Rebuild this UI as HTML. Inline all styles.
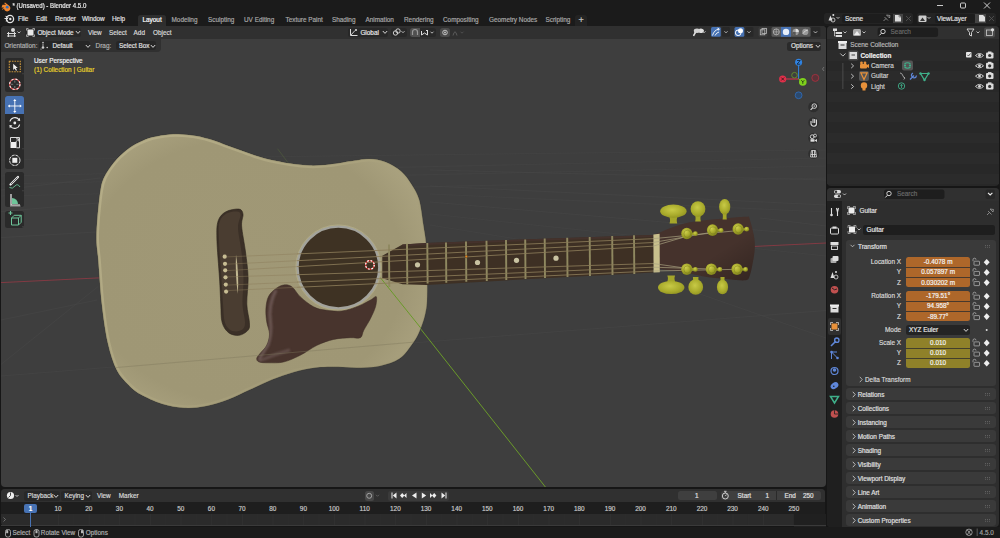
<!DOCTYPE html>
<html><head><meta charset="utf-8">
<style>
*{box-sizing:border-box;margin:0;padding:0}
html,body{width:1000px;height:538px;overflow:hidden;background:#161616;font-family:"Liberation Sans",sans-serif;color:#d9d9d9;font-size:6.4px;}
.a{position:absolute}
.t{position:absolute;white-space:nowrap;line-height:8px;height:8px;-webkit-text-stroke:0.18px currentColor}
.r{border-radius:2.5px}
svg{position:absolute;overflow:visible}
</style></head>
<body>
<!-- ============ TITLE BAR ============ -->
<div class="a" style="left:0;top:0;width:1000px;height:12px;background:#1b1b1b"></div>
<svg style="left:0;top:0" width="12" height="12"><path d="M2.5 4.8 L6 4.8 L4.2 3.2 L5 2.6 L9.5 6 A3.2 3.2 0 1 1 4 8.6 L2.6 9.8 L2 9.2 L4 7.6 L1.5 7.6 Z" fill="#f0852e"/><circle cx="7.2" cy="7.2" r="1.4" fill="#2f6fbf"/></svg>
<div class="t" style="left:12.5px;top:2px;font-size:6.1px;color:#e8e8e8;transform:scaleY(1.12);transform-origin:0 50%">* (Unsaved) - Blender 4.5.0</div>
<svg style="left:0;top:0" width="1000" height="12">
 <path d="M937 5.5 H943" stroke="#e0e0e0" stroke-width="0.9"/>
 <rect x="960.5" y="3" width="5" height="5" rx="1" fill="none" stroke="#e0e0e0" stroke-width="0.9"/>
 <path d="M984 2.5 L990 8.5 M990 2.5 L984 8.5" stroke="#e0e0e0" stroke-width="0.9"/>
</svg>
<!-- ============ TOPBAR ============ -->
<div class="a" style="left:0;top:12px;width:1000px;height:14px;background:#1b1b1b"></div>
<svg style="left:0;top:12px" width="20" height="14"><circle cx="10" cy="7" r="3.6" fill="none" stroke="#e6e6e6" stroke-width="1.3"/><circle cx="10.3" cy="7" r="1.2" fill="#e6e6e6"/><path d="M4.5 6.5 L8 6.5 M5.5 4.3 L8.5 5.2 M5.8 9 L8 8" stroke="#e6e6e6" stroke-width="1"/></svg>
<div class="t" style="left:18px;top:15px;color:#e0e0e0">File</div>
<div class="t" style="left:36px;top:15px;color:#e0e0e0">Edit</div>
<div class="t" style="left:55px;top:15px;color:#e0e0e0">Render</div>
<div class="t" style="left:82px;top:15px;color:#e0e0e0">Window</div>
<div class="t" style="left:112px;top:15px;color:#e0e0e0">Help</div>
<div class="a" style="left:138px;top:15px;width:28px;height:11px;background:#2e2e2e;border-radius:2.5px 2.5px 0 0"></div>
<div class="t" style="left:142.5px;top:16px;color:#ffffff">Layout</div>
<div class="t" style="left:171.5px;top:16px;color:#a8a8a8">Modeling</div>
<div class="t" style="left:208px;top:16px;color:#a8a8a8">Sculpting</div>
<div class="t" style="left:244px;top:16px;color:#a8a8a8">UV Editing</div>
<div class="t" style="left:285.5px;top:16px;color:#a8a8a8">Texture Paint</div>
<div class="t" style="left:332px;top:16px;color:#a8a8a8">Shading</div>
<div class="t" style="left:365.5px;top:16px;color:#a8a8a8">Animation</div>
<div class="t" style="left:404px;top:16px;color:#a8a8a8">Rendering</div>
<div class="t" style="left:443px;top:16px;color:#a8a8a8">Compositing</div>
<div class="t" style="left:489px;top:16px;color:#a8a8a8">Geometry Nodes</div>
<div class="t" style="left:545.5px;top:16px;color:#a8a8a8">Scripting</div>
<div class="a" style="left:575px;top:15px;width:12px;height:11px;background:#232323;border-radius:2.5px 2.5px 0 0"></div>
<div class="t" style="left:578.5px;top:15.5px;color:#c8c8c8;font-size:9px">+</div>
<!-- scene / viewlayer -->
<div class="a r" style="left:824px;top:13px;width:89px;height:10.5px;background:#242424"></div>
<div class="a r" style="left:842px;top:13.5px;width:61px;height:9.5px;background:#1d1d1d"></div>
<div class="a" style="left:893px;top:13.5px;width:10px;height:9.5px;background:#454545"></div>
<div class="t" style="left:845px;top:14.5px;color:#e0e0e0">Scene</div>
<div class="a r" style="left:916.5px;top:13px;width:79px;height:10.5px;background:#242424"></div>
<div class="a r" style="left:935px;top:13.5px;width:40px;height:9.5px;background:#1d1d1d"></div>
<div class="a" style="left:975px;top:13.5px;width:11px;height:9.5px;background:#454545"></div>
<div class="t" style="left:937px;top:14.5px;color:#e0e0e0">ViewLayer</div>

<!-- ============ VIEWPORT ============ -->
<div class="a" id="vp" style="left:1px;top:26px;width:824.5px;height:461px;background:#3e3e3e;border-radius:4px;overflow:hidden">
  <div class="a" style="left:0;top:0;width:825px;height:12.5px;background:#303030"></div>
  <div class="a" style="left:0;top:12.5px;width:160px;height:13.5px;background:#303030;border-bottom-right-radius:4px"></div>
</div>


<!-- GRID/AXES -->
<svg style="left:0;top:0" width="1000" height="538" viewBox="0 0 1000 538">
<g stroke="#474747" stroke-width="0.6" fill="none">
<path d="M1 237.6 L98 231.9"/>
<path d="M1 176 L826 158" stroke-width="0.5"/>
<path d="M1 184 L826 166" stroke-width="0.5"/>
<path d="M1 196 L826 178" stroke-width="0.5"/>
<path d="M430 194 L826 212" stroke-width="0.5"/>
<path d="M430 214 L826 256" stroke-width="0.5"/>
<path d="M430 225 L660 262" stroke-width="0.5"/>
<path d="M1 160 L826 150" stroke-width="0.5"/>

<path d="M1 211.7 L98 203"/>
<path d="M1 364.4 L98 286.6"/>
<path d="M1 376 L420 342.4 L826 310.5"/>
<path d="M1 190 L100 178"/>
<path d="M660 280 L826 338"/>
<path d="M430 202 L826 236"/>
<path d="M430 186 L826 205"/>
<path d="M430 170 L826 180"/>
<path d="M760 218 L826 226"/>
<path d="M1 320 L97 300"/>
</g>
<path d="M1 282.6 L826 243" stroke="#8a3a44" stroke-width="0.9"/>
<path d="M384.4 283 L545.4 487" stroke="#6a9a2a" stroke-width="1"/>
<path d="M277.5 148.7 L288.4 163.2" stroke="#4e5a3c" stroke-width="0.7"/>
</svg>
<!-- GUITAR -->
<svg style="left:0;top:0" width="1000" height="538" viewBox="0 0 1000 538">
<defs><radialGradient id="bg1" cx="0.45" cy="0.5" r="0.6"><stop offset="0" stop-color="#a09876"/><stop offset="0.8" stop-color="#9f9775"/><stop offset="1" stop-color="#aaa27f"/></radialGradient><linearGradient id="rim" x1="96" y1="134" x2="427" y2="408" gradientUnits="userSpaceOnUse"><stop offset="0" stop-color="#b7af89"/><stop offset="0.45" stop-color="#aca47f"/><stop offset="0.8" stop-color="#a39b78" stop-opacity="0.3"/><stop offset="1" stop-color="#9a9270" stop-opacity="0"/></linearGradient><filter id="blur1" x="-20%" y="-20%" width="140%" height="140%"><feGaussianBlur stdDeviation="0.9"/></filter></defs>
<clipPath id="bodyclip"><path d="M96.5 240.0 C96.4 232.9 96.8 225.9 97.5 217.6 C98.2 209.3 99.4 196.8 100.6 190.0 C101.8 183.2 102.3 181.4 104.5 176.8 C106.7 172.2 110.3 166.9 114.0 162.4 C117.7 157.9 122.6 153.3 126.8 150.0 C131.0 146.7 134.7 144.6 139.0 142.5 C143.3 140.4 147.3 138.6 152.5 137.3 C157.7 136.0 165.1 135.0 170.0 134.5 C174.9 134.0 177.6 134.2 182.0 134.5 C186.4 134.8 191.0 135.1 196.2 136.1 C201.4 137.1 207.9 138.7 213.0 140.3 C218.1 141.9 222.3 143.8 227.0 145.5 C231.7 147.2 236.3 148.8 241.0 150.5 C245.7 152.2 250.3 154.0 255.0 155.5 C259.7 157.0 263.2 158.2 269.0 159.6 C274.8 160.9 283.2 162.6 290.0 163.6 C296.8 164.6 303.3 165.4 310.0 165.6 C316.7 165.8 322.7 165.3 330.0 164.5 C337.3 163.7 347.4 161.7 354.0 160.8 C360.6 159.9 364.5 158.8 369.7 159.0 C374.9 159.2 380.1 160.1 385.3 162.1 C390.5 164.1 396.6 167.5 400.9 171.2 C405.2 174.9 408.3 179.4 411.3 184.2 C414.3 189.0 417.1 192.9 419.1 199.8 C421.1 206.7 422.2 218.2 423.4 225.6 C424.5 232.9 425.4 236.5 426.0 243.9 C426.6 251.3 426.8 260.6 427.0 270.0 C427.2 279.4 427.3 292.8 427.0 300.0 C426.7 307.2 426.2 309.2 425.3 313.4 C424.4 317.6 423.3 321.1 421.9 325.0 C420.5 328.9 418.8 333.2 416.9 336.8 C414.9 340.4 412.4 343.7 410.2 346.8 C408.0 349.9 406.0 352.8 403.5 355.2 C401.0 357.6 398.2 359.5 395.2 361.0 C392.1 362.5 388.8 363.4 385.2 364.4 C381.6 365.4 378.1 366.3 373.4 366.9 C368.6 367.4 362.6 367.7 356.7 367.7 C350.8 367.7 344.8 366.8 338.0 366.8 C331.2 366.8 323.3 366.6 316.0 367.5 C308.7 368.4 301.3 369.9 294.0 371.9 C286.7 373.9 279.3 376.7 272.0 379.6 C264.7 382.5 257.3 386.2 250.0 389.5 C242.7 392.8 235.3 396.6 228.0 399.4 C220.7 402.1 213.3 404.6 206.0 406.0 C198.7 407.4 191.3 408.2 184.0 407.8 C176.7 407.4 169.3 406.1 162.0 403.8 C154.7 401.5 145.6 397.1 140.0 394.0 C134.4 390.9 132.6 389.0 128.7 385.0 C124.8 381.0 120.3 376.9 116.8 370.0 C113.3 363.1 110.4 354.2 107.9 343.3 C105.4 332.4 103.5 318.5 101.9 304.6 C100.3 290.7 99.2 270.8 98.3 260.0 C97.4 249.2 96.6 247.1 96.5 240.0Z"/></clipPath>
<path d="M96.5 240.0 C96.4 232.9 96.8 225.9 97.5 217.6 C98.2 209.3 99.4 196.8 100.6 190.0 C101.8 183.2 102.3 181.4 104.5 176.8 C106.7 172.2 110.3 166.9 114.0 162.4 C117.7 157.9 122.6 153.3 126.8 150.0 C131.0 146.7 134.7 144.6 139.0 142.5 C143.3 140.4 147.3 138.6 152.5 137.3 C157.7 136.0 165.1 135.0 170.0 134.5 C174.9 134.0 177.6 134.2 182.0 134.5 C186.4 134.8 191.0 135.1 196.2 136.1 C201.4 137.1 207.9 138.7 213.0 140.3 C218.1 141.9 222.3 143.8 227.0 145.5 C231.7 147.2 236.3 148.8 241.0 150.5 C245.7 152.2 250.3 154.0 255.0 155.5 C259.7 157.0 263.2 158.2 269.0 159.6 C274.8 160.9 283.2 162.6 290.0 163.6 C296.8 164.6 303.3 165.4 310.0 165.6 C316.7 165.8 322.7 165.3 330.0 164.5 C337.3 163.7 347.4 161.7 354.0 160.8 C360.6 159.9 364.5 158.8 369.7 159.0 C374.9 159.2 380.1 160.1 385.3 162.1 C390.5 164.1 396.6 167.5 400.9 171.2 C405.2 174.9 408.3 179.4 411.3 184.2 C414.3 189.0 417.1 192.9 419.1 199.8 C421.1 206.7 422.2 218.2 423.4 225.6 C424.5 232.9 425.4 236.5 426.0 243.9 C426.6 251.3 426.8 260.6 427.0 270.0 C427.2 279.4 427.3 292.8 427.0 300.0 C426.7 307.2 426.2 309.2 425.3 313.4 C424.4 317.6 423.3 321.1 421.9 325.0 C420.5 328.9 418.8 333.2 416.9 336.8 C414.9 340.4 412.4 343.7 410.2 346.8 C408.0 349.9 406.0 352.8 403.5 355.2 C401.0 357.6 398.2 359.5 395.2 361.0 C392.1 362.5 388.8 363.4 385.2 364.4 C381.6 365.4 378.1 366.3 373.4 366.9 C368.6 367.4 362.6 367.7 356.7 367.7 C350.8 367.7 344.8 366.8 338.0 366.8 C331.2 366.8 323.3 366.6 316.0 367.5 C308.7 368.4 301.3 369.9 294.0 371.9 C286.7 373.9 279.3 376.7 272.0 379.6 C264.7 382.5 257.3 386.2 250.0 389.5 C242.7 392.8 235.3 396.6 228.0 399.4 C220.7 402.1 213.3 404.6 206.0 406.0 C198.7 407.4 191.3 408.2 184.0 407.8 C176.7 407.4 169.3 406.1 162.0 403.8 C154.7 401.5 145.6 397.1 140.0 394.0 C134.4 390.9 132.6 389.0 128.7 385.0 C124.8 381.0 120.3 376.9 116.8 370.0 C113.3 363.1 110.4 354.2 107.9 343.3 C105.4 332.4 103.5 318.5 101.9 304.6 C100.3 290.7 99.2 270.8 98.3 260.0 C97.4 249.2 96.6 247.1 96.5 240.0Z" fill="none" stroke="#333333" stroke-width="1.4"/>
<path d="M96.5 240.0 C96.4 232.9 96.8 225.9 97.5 217.6 C98.2 209.3 99.4 196.8 100.6 190.0 C101.8 183.2 102.3 181.4 104.5 176.8 C106.7 172.2 110.3 166.9 114.0 162.4 C117.7 157.9 122.6 153.3 126.8 150.0 C131.0 146.7 134.7 144.6 139.0 142.5 C143.3 140.4 147.3 138.6 152.5 137.3 C157.7 136.0 165.1 135.0 170.0 134.5 C174.9 134.0 177.6 134.2 182.0 134.5 C186.4 134.8 191.0 135.1 196.2 136.1 C201.4 137.1 207.9 138.7 213.0 140.3 C218.1 141.9 222.3 143.8 227.0 145.5 C231.7 147.2 236.3 148.8 241.0 150.5 C245.7 152.2 250.3 154.0 255.0 155.5 C259.7 157.0 263.2 158.2 269.0 159.6 C274.8 160.9 283.2 162.6 290.0 163.6 C296.8 164.6 303.3 165.4 310.0 165.6 C316.7 165.8 322.7 165.3 330.0 164.5 C337.3 163.7 347.4 161.7 354.0 160.8 C360.6 159.9 364.5 158.8 369.7 159.0 C374.9 159.2 380.1 160.1 385.3 162.1 C390.5 164.1 396.6 167.5 400.9 171.2 C405.2 174.9 408.3 179.4 411.3 184.2 C414.3 189.0 417.1 192.9 419.1 199.8 C421.1 206.7 422.2 218.2 423.4 225.6 C424.5 232.9 425.4 236.5 426.0 243.9 C426.6 251.3 426.8 260.6 427.0 270.0 C427.2 279.4 427.3 292.8 427.0 300.0 C426.7 307.2 426.2 309.2 425.3 313.4 C424.4 317.6 423.3 321.1 421.9 325.0 C420.5 328.9 418.8 333.2 416.9 336.8 C414.9 340.4 412.4 343.7 410.2 346.8 C408.0 349.9 406.0 352.8 403.5 355.2 C401.0 357.6 398.2 359.5 395.2 361.0 C392.1 362.5 388.8 363.4 385.2 364.4 C381.6 365.4 378.1 366.3 373.4 366.9 C368.6 367.4 362.6 367.7 356.7 367.7 C350.8 367.7 344.8 366.8 338.0 366.8 C331.2 366.8 323.3 366.6 316.0 367.5 C308.7 368.4 301.3 369.9 294.0 371.9 C286.7 373.9 279.3 376.7 272.0 379.6 C264.7 382.5 257.3 386.2 250.0 389.5 C242.7 392.8 235.3 396.6 228.0 399.4 C220.7 402.1 213.3 404.6 206.0 406.0 C198.7 407.4 191.3 408.2 184.0 407.8 C176.7 407.4 169.3 406.1 162.0 403.8 C154.7 401.5 145.6 397.1 140.0 394.0 C134.4 390.9 132.6 389.0 128.7 385.0 C124.8 381.0 120.3 376.9 116.8 370.0 C113.3 363.1 110.4 354.2 107.9 343.3 C105.4 332.4 103.5 318.5 101.9 304.6 C100.3 290.7 99.2 270.8 98.3 260.0 C97.4 249.2 96.6 247.1 96.5 240.0Z" fill="url(#bg1)"/>
<path d="M96.5 240.0 C96.4 232.9 96.8 225.9 97.5 217.6 C98.2 209.3 99.4 196.8 100.6 190.0 C101.8 183.2 102.3 181.4 104.5 176.8 C106.7 172.2 110.3 166.9 114.0 162.4 C117.7 157.9 122.6 153.3 126.8 150.0 C131.0 146.7 134.7 144.6 139.0 142.5 C143.3 140.4 147.3 138.6 152.5 137.3 C157.7 136.0 165.1 135.0 170.0 134.5 C174.9 134.0 177.6 134.2 182.0 134.5 C186.4 134.8 191.0 135.1 196.2 136.1 C201.4 137.1 207.9 138.7 213.0 140.3 C218.1 141.9 222.3 143.8 227.0 145.5 C231.7 147.2 236.3 148.8 241.0 150.5 C245.7 152.2 250.3 154.0 255.0 155.5 C259.7 157.0 263.2 158.2 269.0 159.6 C274.8 160.9 283.2 162.6 290.0 163.6 C296.8 164.6 303.3 165.4 310.0 165.6 C316.7 165.8 322.7 165.3 330.0 164.5 C337.3 163.7 347.4 161.7 354.0 160.8 C360.6 159.9 364.5 158.8 369.7 159.0 C374.9 159.2 380.1 160.1 385.3 162.1 C390.5 164.1 396.6 167.5 400.9 171.2 C405.2 174.9 408.3 179.4 411.3 184.2 C414.3 189.0 417.1 192.9 419.1 199.8 C421.1 206.7 422.2 218.2 423.4 225.6 C424.5 232.9 425.4 236.5 426.0 243.9 C426.6 251.3 426.8 260.6 427.0 270.0 C427.2 279.4 427.3 292.8 427.0 300.0 C426.7 307.2 426.2 309.2 425.3 313.4 C424.4 317.6 423.3 321.1 421.9 325.0 C420.5 328.9 418.8 333.2 416.9 336.8 C414.9 340.4 412.4 343.7 410.2 346.8 C408.0 349.9 406.0 352.8 403.5 355.2 C401.0 357.6 398.2 359.5 395.2 361.0 C392.1 362.5 388.8 363.4 385.2 364.4 C381.6 365.4 378.1 366.3 373.4 366.9 C368.6 367.4 362.6 367.7 356.7 367.7 C350.8 367.7 344.8 366.8 338.0 366.8 C331.2 366.8 323.3 366.6 316.0 367.5 C308.7 368.4 301.3 369.9 294.0 371.9 C286.7 373.9 279.3 376.7 272.0 379.6 C264.7 382.5 257.3 386.2 250.0 389.5 C242.7 392.8 235.3 396.6 228.0 399.4 C220.7 402.1 213.3 404.6 206.0 406.0 C198.7 407.4 191.3 408.2 184.0 407.8 C176.7 407.4 169.3 406.1 162.0 403.8 C154.7 401.5 145.6 397.1 140.0 394.0 C134.4 390.9 132.6 389.0 128.7 385.0 C124.8 381.0 120.3 376.9 116.8 370.0 C113.3 363.1 110.4 354.2 107.9 343.3 C105.4 332.4 103.5 318.5 101.9 304.6 C100.3 290.7 99.2 270.8 98.3 260.0 C97.4 249.2 96.6 247.1 96.5 240.0Z" fill="none" stroke="url(#rim)" stroke-width="5" clip-path="url(#bodyclip)"/>
<path d="M96.5 240.0 C96.4 232.9 96.8 225.9 97.5 217.6 C98.2 209.3 99.4 196.8 100.6 190.0 C101.8 183.2 102.3 181.4 104.5 176.8 C106.7 172.2 110.3 166.9 114.0 162.4 C117.7 157.9 122.6 153.3 126.8 150.0 C131.0 146.7 134.7 144.6 139.0 142.5 C143.3 140.4 147.3 138.6 152.5 137.3 C157.7 136.0 165.1 135.0 170.0 134.5 C174.9 134.0 177.6 134.2 182.0 134.5 C186.4 134.8 191.0 135.1 196.2 136.1 C201.4 137.1 207.9 138.7 213.0 140.3 C218.1 141.9 222.3 143.8 227.0 145.5 C231.7 147.2 236.3 148.8 241.0 150.5 C245.7 152.2 250.3 154.0 255.0 155.5 C259.7 157.0 263.2 158.2 269.0 159.6 C274.8 160.9 283.2 162.6 290.0 163.6 C296.8 164.6 303.3 165.4 310.0 165.6 C316.7 165.8 322.7 165.3 330.0 164.5 C337.3 163.7 347.4 161.7 354.0 160.8 C360.6 159.9 364.5 158.8 369.7 159.0 C374.9 159.2 380.1 160.1 385.3 162.1 C390.5 164.1 396.6 167.5 400.9 171.2 C405.2 174.9 408.3 179.4 411.3 184.2 C414.3 189.0 417.1 192.9 419.1 199.8 C421.1 206.7 422.2 218.2 423.4 225.6 C424.5 232.9 425.4 236.5 426.0 243.9 C426.6 251.3 426.8 260.6 427.0 270.0 C427.2 279.4 427.3 292.8 427.0 300.0 C426.7 307.2 426.2 309.2 425.3 313.4 C424.4 317.6 423.3 321.1 421.9 325.0 C420.5 328.9 418.8 333.2 416.9 336.8 C414.9 340.4 412.4 343.7 410.2 346.8 C408.0 349.9 406.0 352.8 403.5 355.2 C401.0 357.6 398.2 359.5 395.2 361.0 C392.1 362.5 388.8 363.4 385.2 364.4 C381.6 365.4 378.1 366.3 373.4 366.9 C368.6 367.4 362.6 367.7 356.7 367.7 C350.8 367.7 344.8 366.8 338.0 366.8 C331.2 366.8 323.3 366.6 316.0 367.5 C308.7 368.4 301.3 369.9 294.0 371.9 C286.7 373.9 279.3 376.7 272.0 379.6 C264.7 382.5 257.3 386.2 250.0 389.5 C242.7 392.8 235.3 396.6 228.0 399.4 C220.7 402.1 213.3 404.6 206.0 406.0 C198.7 407.4 191.3 408.2 184.0 407.8 C176.7 407.4 169.3 406.1 162.0 403.8 C154.7 401.5 145.6 397.1 140.0 394.0 C134.4 390.9 132.6 389.0 128.7 385.0 C124.8 381.0 120.3 376.9 116.8 370.0 C113.3 363.1 110.4 354.2 107.9 343.3 C105.4 332.4 103.5 318.5 101.9 304.6 C100.3 290.7 99.2 270.8 98.3 260.0 C97.4 249.2 96.6 247.1 96.5 240.0Z" fill="none" stroke="#8a8464" stroke-width="0.6" opacity="0.6"/>
<circle cx="338.4" cy="267.5" r="41" fill="#3e3223" stroke="#a3a39c" stroke-width="2.6"/>
<circle cx="338.4" cy="267.5" r="42.6" fill="none" stroke="#b4ad86" stroke-width="0.8"/>
<clipPath id="pickclip"><path d="M283.5 285.0 C280.7 285.4 277.6 287.2 275.1 289.2 C272.6 291.1 269.9 293.5 268.4 296.7 C266.9 299.9 266.2 304.2 265.9 308.4 C265.6 312.6 266.1 317.5 266.7 321.8 C267.3 326.1 269.5 330.1 269.5 334.0 C269.5 337.9 268.3 342.0 266.7 345.3 C265.1 348.6 261.7 351.4 260.0 353.6 C258.3 355.8 256.8 357.2 256.7 358.6 C256.6 360.0 257.2 361.3 259.2 362.0 C261.1 362.7 264.3 362.8 268.4 362.8 C272.4 362.8 278.2 363.2 283.5 362.0 C288.8 360.8 294.6 358.1 300.2 355.3 C305.8 352.5 311.4 348.0 317.0 345.3 C322.6 342.6 328.1 340.7 333.7 339.4 C339.3 338.1 345.9 338.0 350.4 337.7 C354.8 337.4 358.2 338.9 360.4 337.7 C362.6 336.4 362.1 333.4 363.8 330.2 C365.5 327.0 368.6 322.4 370.5 318.5 C372.4 314.6 374.5 310.4 375.5 306.8 C376.5 303.2 377.1 297.8 376.3 296.7 C375.5 295.6 373.4 298.5 370.5 300.0 C367.6 301.5 363.6 304.1 358.8 305.9 C354.1 307.7 347.6 310.3 342.0 311.0 C336.4 311.7 330.0 310.8 325.3 310.1 C320.6 309.4 317.8 309.0 313.6 306.8 C309.4 304.6 303.8 300.1 300.2 296.7 C296.6 293.3 294.6 288.6 291.8 286.7 C289.0 284.8 286.3 284.6 283.5 285.0Z"/></clipPath>
<path d="M283.5 285.0 C280.7 285.4 277.6 287.2 275.1 289.2 C272.6 291.1 269.9 293.5 268.4 296.7 C266.9 299.9 266.2 304.2 265.9 308.4 C265.6 312.6 266.1 317.5 266.7 321.8 C267.3 326.1 269.5 330.1 269.5 334.0 C269.5 337.9 268.3 342.0 266.7 345.3 C265.1 348.6 261.7 351.4 260.0 353.6 C258.3 355.8 256.8 357.2 256.7 358.6 C256.6 360.0 257.2 361.3 259.2 362.0 C261.1 362.7 264.3 362.8 268.4 362.8 C272.4 362.8 278.2 363.2 283.5 362.0 C288.8 360.8 294.6 358.1 300.2 355.3 C305.8 352.5 311.4 348.0 317.0 345.3 C322.6 342.6 328.1 340.7 333.7 339.4 C339.3 338.1 345.9 338.0 350.4 337.7 C354.8 337.4 358.2 338.9 360.4 337.7 C362.6 336.4 362.1 333.4 363.8 330.2 C365.5 327.0 368.6 322.4 370.5 318.5 C372.4 314.6 374.5 310.4 375.5 306.8 C376.5 303.2 377.1 297.8 376.3 296.7 C375.5 295.6 373.4 298.5 370.5 300.0 C367.6 301.5 363.6 304.1 358.8 305.9 C354.1 307.7 347.6 310.3 342.0 311.0 C336.4 311.7 330.0 310.8 325.3 310.1 C320.6 309.4 317.8 309.0 313.6 306.8 C309.4 304.6 303.8 300.1 300.2 296.7 C296.6 293.3 294.6 288.6 291.8 286.7 C289.0 284.8 286.3 284.6 283.5 285.0Z" fill="#48342d" stroke="#3a2a25" stroke-width="0.5"/>
<path d="M276 290 Q268 305 270.5 322 Q272 333 268 345 Q262 354 259 360" fill="none" stroke="#75605d" stroke-width="3" opacity="0.8" filter="url(#blur1)" clip-path="url(#pickclip)"/>
<path d="M259 361 Q275 354 290 350" fill="none" stroke="#75605d" stroke-width="3" opacity="0.6" filter="url(#blur1)" clip-path="url(#pickclip)"/>
<path d="M97 369.2 L427 341" stroke="#7d775c" stroke-width="0.6" opacity="0.7" clip-path="url(#bodyclip)"/>
<path d="M380.4 277.7 L430 339.5" stroke="#6a9a2a" stroke-width="1" clip-path="url(#bodyclip)"/>
<path d="M218.2 220.8 C219.7 216.2 222.5 213.6 226.0 211.7 C229.5 209.8 236.2 208.7 239.0 209.1 C241.8 209.5 242.6 211.5 243.0 214.3 C243.4 217.1 241.2 219.7 241.6 226.0 C242.0 232.3 244.4 243.3 245.5 252.0 C246.6 260.7 247.9 269.3 248.1 278.0 C248.3 286.7 246.6 296.6 246.8 304.0 C247.0 311.4 249.2 317.9 249.4 322.3 C249.6 326.7 249.8 327.9 248.1 330.1 C246.4 332.3 242.2 334.9 239.0 335.3 C235.8 335.7 231.4 334.9 228.6 332.7 C225.8 330.5 223.4 327.1 222.1 322.3 C220.8 317.5 221.2 311.4 220.8 304.0 C220.4 296.6 220.2 288.8 219.5 278.0 C218.8 267.2 217.1 248.5 216.9 239.0 C216.7 229.5 216.7 225.4 218.2 220.8Z" fill="#3b3027" stroke="#2a221b" stroke-width="0.6"/>
<path d="M219.5 222.0 C220.8 217.6 223.6 215.2 226.5 213.5 C229.4 211.8 234.7 211.2 237.0 211.5 C239.3 211.8 240.3 212.2 240.5 215.0 C240.7 217.8 237.8 221.8 238.0 228.0 C238.2 234.2 240.6 243.7 241.5 252.0 C242.4 260.3 243.3 269.3 243.5 278.0 C243.7 286.7 242.2 296.7 242.5 304.0 C242.8 311.3 244.9 317.8 245.0 322.0 C245.1 326.2 244.5 327.4 243.0 329.0 C241.5 330.6 238.3 331.5 236.0 331.5 C233.7 331.5 230.9 330.8 229.0 329.0 C227.1 327.2 225.5 325.2 224.5 321.0 C223.5 316.8 223.5 311.2 223.0 304.0 C222.5 296.8 222.2 288.7 221.5 278.0 C220.8 267.3 219.3 249.3 219.0 240.0 C218.7 230.7 218.2 226.4 219.5 222.0Z" fill="#4a3d31"/>
<path d="M236 254.5 Q239.2 274 237.8 294 Q235 274 236 254.5Z" fill="#c2b891"/>
<circle cx="224.7" cy="256.7" r="2.1" fill="#c8bd93"/>
<circle cx="225.0" cy="263.8" r="2.1" fill="#c8bd93"/>
<circle cx="225.2" cy="270.3" r="2.1" fill="#c8bd93"/>
<circle cx="225.5" cy="277.3" r="2.1" fill="#c8bd93"/>
<circle cx="225.8" cy="284.6" r="2.1" fill="#c8bd93"/>
<circle cx="226.1" cy="291.6" r="2.1" fill="#c8bd93"/>
<path d="M382.3 255.8 L402.5 244.5 L426.5 243 L530 239.3 L653.5 235 L653.5 272.5 L530 279 L426.5 285 L402.5 284.3 L382.3 278.3 Z" fill="#3e3024"/>
<path d="M402.5 244.5 L426.5 243 L530 239.3 L653.5 235 L653.5 237 L530 241 L426.5 245 L402.5 246.5Z" fill="#45322c"/>
<path d="M653.4 234.6 C654.5 234.2 657.6 233.4 660.0 232.5 C662.4 231.6 663.9 230.5 668.0 229.0 C672.1 227.5 678.1 224.9 684.6 223.4 C691.1 221.9 699.5 221.0 706.9 220.1 C714.3 219.2 722.5 218.4 729.2 217.9 C735.9 217.4 743.6 216.8 747.0 216.8 C750.4 216.8 748.2 214.9 749.3 217.9 C750.4 220.9 752.8 229.6 753.7 234.6 C754.6 239.6 755.0 243.2 754.8 248.0 C754.6 252.8 753.5 258.8 752.6 263.6 C751.7 268.4 750.6 274.2 749.3 277.0 C748.0 279.8 748.1 279.9 744.8 280.3 C741.4 280.7 735.5 279.8 729.2 279.2 C722.9 278.6 714.3 278.1 706.9 277.0 C699.5 275.9 692.0 273.8 684.6 272.5 C677.2 271.2 666.0 269.8 662.3 269.2 L653.4 268 Z" fill="#45322c"/>
<defs><linearGradient id="hsh" x1="0" y1="0" x2="1" y2="1"><stop offset="0" stop-color="#000" stop-opacity="0"/><stop offset="0.6" stop-color="#000" stop-opacity="0"/><stop offset="1" stop-color="#000" stop-opacity="0.25"/></linearGradient></defs>
<path d="M653.4 234.6 C654.5 234.2 657.6 233.4 660.0 232.5 C662.4 231.6 663.9 230.5 668.0 229.0 C672.1 227.5 678.1 224.9 684.6 223.4 C691.1 221.9 699.5 221.0 706.9 220.1 C714.3 219.2 722.5 218.4 729.2 217.9 C735.9 217.4 743.6 216.8 747.0 216.8 C750.4 216.8 748.2 214.9 749.3 217.9 C750.4 220.9 752.8 229.6 753.7 234.6 C754.6 239.6 755.0 243.2 754.8 248.0 C754.6 252.8 753.5 258.8 752.6 263.6 C751.7 268.4 750.6 274.2 749.3 277.0 C748.0 279.8 748.1 279.9 744.8 280.3 C741.4 280.7 735.5 279.8 729.2 279.2 C722.9 278.6 714.3 278.1 706.9 277.0 C699.5 275.9 692.0 273.8 684.6 272.5 C677.2 271.2 666.0 269.8 662.3 269.2 L653.4 268 Z" fill="url(#hsh)"/>
<path d="M389 244.5 L389.3 286.9" stroke="#8f8860" stroke-width="1.9"/>
<path d="M407 243.8 L407.3 284.6" stroke="#8f8860" stroke-width="1.9"/>
<path d="M427.3 243.1 L427.6 283.6" stroke="#8f8860" stroke-width="1.9"/>
<path d="M446 242.4 L446.3 282.8" stroke="#8f8860" stroke-width="1.9"/>
<path d="M466 241.6 L466.3 281.8" stroke="#8f8860" stroke-width="1.9"/>
<path d="M486.5 240.8 L486.8 280.9" stroke="#8f8860" stroke-width="1.9"/>
<path d="M506 240.1 L506.3 279.9" stroke="#8f8860" stroke-width="1.9"/>
<path d="M525.2 239.4 L525.5 279.0" stroke="#8f8860" stroke-width="1.9"/>
<path d="M544.7 238.6 L545.0 278.1" stroke="#8f8860" stroke-width="1.9"/>
<path d="M567.2 237.8 L567.5 277.1" stroke="#8f8860" stroke-width="1.9"/>
<path d="M589.7 236.9 L590.0 276.0" stroke="#8f8860" stroke-width="1.9"/>
<path d="M612.2 236.1 L612.5 274.9" stroke="#8f8860" stroke-width="1.9"/>
<path d="M634 235.2 L634.3 273.9" stroke="#8f8860" stroke-width="1.9"/>
<circle cx="417.5" cy="264.8" r="2.6" fill="#c9c3a2"/>
<circle cx="477.5" cy="262.5" r="2.6" fill="#c9c3a2"/>
<circle cx="516.5" cy="260.3" r="2.6" fill="#c9c3a2"/>
<circle cx="556" cy="258.2" r="2.6" fill="#c9c3a2"/>
<path d="M653.4 234.6 L659.6 233.8 L659.8 272.3 L653.6 272.5Z" fill="#c8bf8c"/>
<path d="M227 256.9 L297 253.9" stroke="#8a7a58" stroke-width="0.8" opacity="0.55"/>
<path d="M297 253.9 L653 238.7" stroke="#8a7a58" stroke-width="0.9" opacity="0.95"/>
<path d="M227 264.2 L297 260.7" stroke="#8a7a58" stroke-width="0.8" opacity="0.55"/>
<path d="M297 260.7 L653 242.5" stroke="#8a7a58" stroke-width="0.9" opacity="0.95"/>
<path d="M227 270.6 L297 266.6" stroke="#8a7a58" stroke-width="0.8" opacity="0.55"/>
<path d="M297 266.6 L653 246.2" stroke="#8a7a58" stroke-width="0.9" opacity="0.95"/>
<path d="M227 276.9 L297 274.7" stroke="#8a7a58" stroke-width="0.8" opacity="0.55"/>
<path d="M297 274.7 L653 263.5" stroke="#8a7a58" stroke-width="0.9" opacity="0.95"/>
<path d="M227 285.1 L297 282.1" stroke="#8a7a58" stroke-width="0.8" opacity="0.55"/>
<path d="M297 282.1 L653 267.2" stroke="#8a7a58" stroke-width="0.9" opacity="0.95"/>
<path d="M227 290.6 L297 287.3" stroke="#8a7a58" stroke-width="0.8" opacity="0.55"/>
<path d="M297 287.3 L653 271.0" stroke="#8a7a58" stroke-width="0.9" opacity="0.95"/>
<path d="M653 246.2 L692.8 234.5" stroke="#a8a080" stroke-width="0.7"/>
<path d="M653 242.5 L718.5 231.1" stroke="#a8a080" stroke-width="0.7"/>
<path d="M653 238.7 L744.1 230.0" stroke="#a8a080" stroke-width="0.7"/>
<path d="M653 263.5 L692.8 269.2" stroke="#a8a080" stroke-width="0.7"/>
<path d="M653 267.2 L717.3 269.2" stroke="#a8a080" stroke-width="0.7"/>
<path d="M653 271.0 L743 269.2" stroke="#a8a080" stroke-width="0.7"/>
<defs><radialGradient id="pg" cx="0.4" cy="0.35" r="0.7"><stop offset="0" stop-color="#cfd04e"/><stop offset="0.5" stop-color="#a9ab2c"/><stop offset="1" stop-color="#7a7c1a"/></radialGradient><radialGradient id="pb" cx="0.45" cy="0.4" r="0.7"><stop offset="0" stop-color="#c8ca46"/><stop offset="0.6" stop-color="#a8aa2b"/><stop offset="1" stop-color="#8a8c20"/></radialGradient></defs>
<path d="M667.9 213.2 Q671.1999999999999 219.5 669.55 223.5 L677.25 223.5 Q675.6 219.5 678.9 213.2Z" fill="#a4a62a"/>
<ellipse cx="673.4" cy="211.2" rx="13.2" ry="6.6" fill="url(#pb)"/>
<path d="M694 211 Q696.4 217.5 695.2 221.5 L700.8 221.5 Q699.6 217.5 702 211Z" fill="#a4a62a"/>
<ellipse cx="698" cy="209" rx="7.4" ry="7.8" fill="url(#pb)"/>
<path d="M721.7 208.7 Q723.5 215.5 722.6 219.5 L726.8000000000001 219.5 Q725.9000000000001 215.5 727.7 208.7Z" fill="#a4a62a"/>
<ellipse cx="724.7" cy="206.7" rx="5.6" ry="7.8" fill="url(#pb)"/>
<path d="M665.7 285.5 Q669.0 279.5 667.35 275.5 L675.0500000000001 275.5 Q673.4000000000001 279.5 676.7 285.5Z" fill="#a4a62a"/>
<ellipse cx="671.2" cy="287.5" rx="13.2" ry="6.6" fill="url(#pb)"/>
<path d="M691.7 285 Q694.1 281 692.9000000000001 277 L698.5 277 Q697.3000000000001 281 699.7 285Z" fill="#a4a62a"/>
<ellipse cx="695.7" cy="287" rx="7.4" ry="7.8" fill="url(#pb)"/>
<path d="M719.5 285 Q721.3 281 720.4 277 L724.6 277 Q723.7 281 725.5 285Z" fill="#a4a62a"/>
<ellipse cx="722.5" cy="287" rx="5.6" ry="7.3" fill="url(#pb)"/>
<path d="M686.8 232.4 L694.8 232.7 L694.8 234.8 L686.8 235.1Z" fill="#a4a62a"/>
<circle cx="695.4" cy="233.7" r="2.4" fill="url(#pg)"/>
<ellipse cx="686.8" cy="233.5" rx="5.6" ry="5.8" fill="url(#pg)"/>
<ellipse cx="687.3" cy="233.8" rx="3.4" ry="3.6" fill="none" stroke="#75771a" stroke-width="0.7" opacity="0.6"/>
<path d="M712.5 229.0 L720.5 229.29999999999998 L720.5 231.4 L712.5 231.7Z" fill="#a4a62a"/>
<circle cx="721.1" cy="230.29999999999998" r="2.4" fill="url(#pg)"/>
<ellipse cx="712.5" cy="230.1" rx="5.6" ry="5.8" fill="url(#pg)"/>
<ellipse cx="713.0" cy="230.4" rx="3.4" ry="3.6" fill="none" stroke="#75771a" stroke-width="0.7" opacity="0.6"/>
<path d="M738.1 227.9 L746.1 228.2 L746.1 230.3 L738.1 230.6Z" fill="#a4a62a"/>
<circle cx="746.7" cy="229.2" r="2.4" fill="url(#pg)"/>
<ellipse cx="738.1" cy="229" rx="5.6" ry="5.8" fill="url(#pg)"/>
<ellipse cx="738.6" cy="229.3" rx="3.4" ry="3.6" fill="none" stroke="#75771a" stroke-width="0.7" opacity="0.6"/>
<path d="M686.8 268.09999999999997 L694.8 268.4 L694.8 270.5 L686.8 270.8Z" fill="#a4a62a"/>
<circle cx="695.4" cy="269.4" r="2.4" fill="url(#pg)"/>
<ellipse cx="686.8" cy="269.2" rx="5.6" ry="5.8" fill="url(#pg)"/>
<ellipse cx="687.3" cy="269.5" rx="3.4" ry="3.6" fill="none" stroke="#75771a" stroke-width="0.7" opacity="0.6"/>
<path d="M711.3 268.09999999999997 L719.3 268.4 L719.3 270.5 L711.3 270.8Z" fill="#a4a62a"/>
<circle cx="719.9" cy="269.4" r="2.4" fill="url(#pg)"/>
<ellipse cx="711.3" cy="269.2" rx="5.6" ry="5.8" fill="url(#pg)"/>
<ellipse cx="711.8" cy="269.5" rx="3.4" ry="3.6" fill="none" stroke="#75771a" stroke-width="0.7" opacity="0.6"/>
<path d="M737 268.09999999999997 L745 268.4 L745 270.5 L737 270.8Z" fill="#a4a62a"/>
<circle cx="745.6" cy="269.4" r="2.4" fill="url(#pg)"/>
<ellipse cx="737" cy="269.2" rx="5.6" ry="5.8" fill="url(#pg)"/>
<ellipse cx="737.5" cy="269.5" rx="3.4" ry="3.6" fill="none" stroke="#75771a" stroke-width="0.7" opacity="0.6"/>
<circle cx="466.3" cy="256.5" r="1.3" fill="#f08a1c" stroke="#222" stroke-width="0.4"/>
<circle cx="369.9" cy="264.9" r="4.3" fill="none" stroke="#e03030" stroke-width="1.3"/>
<circle cx="369.9" cy="264.9" r="4.3" fill="none" stroke="#ffffff" stroke-width="1.3" stroke-dasharray="1.7 1.7"/>
</svg>
<!-- viewport header contents (absolute page coords) -->
<svg style="left:0;top:26px" width="30" height="13"><g fill="#d8d8d8"><circle cx="13" cy="4" r="2"/><rect x="7" y="7" width="9" height="1"/><rect x="7" y="9.5" width="9" height="1"/><rect x="8" y="6" width="1" height="5"/><rect x="14" y="6" width="1" height="5"/></g><path d="M17.5 5.5 L19 7 L20.5 5.5" fill="none" stroke="#d8d8d8" stroke-width="0.8"/></svg>
<div class="a r" style="left:25px;top:27.5px;width:56px;height:9.5px;background:#282828"></div>
<svg style="left:26px;top:28px" width="9" height="9"><rect x="1.5" y="1.5" width="6" height="6" fill="#e8e8e8"/><path d="M0.5 2.5 V0.5 H2.5 M6.5 0.5 H8.5 V2.5 M8.5 6.5 V8.5 H6.5 M2.5 8.5 H0.5 V6.5" fill="none" stroke="#bbb" stroke-width="0.8"/></svg>
<div class="t" style="left:37.4px;top:28.5px;color:#e0e0e0">Object Mode</div>
<svg style="left:75px;top:30px" width="6" height="5"><path d="M0.8 1 L3 3.4 L5.2 1" fill="none" stroke="#d8d8d8" stroke-width="1"/></svg>
<div class="t" style="left:88px;top:28.5px;color:#d8d8d8">View</div>
<div class="t" style="left:109px;top:28.5px;color:#d8d8d8">Select</div>
<div class="t" style="left:133.6px;top:28.5px;color:#d8d8d8">Add</div>
<div class="t" style="left:153px;top:28.5px;color:#d8d8d8">Object</div>
<!-- tool settings -->
<div class="t" style="left:4.4px;top:42px;color:#b0b0b0">Orientation:</div>
<div class="a r" style="left:39px;top:41px;width:51px;height:9px;background:#262626"></div>
<svg style="left:40px;top:41px" width="10" height="9"><g fill="#d0d0d0"><circle cx="3" cy="1.5" r="0.8"/><rect x="2.6" y="2.5" width="0.8" height="3"/><circle cx="3" cy="6.5" r="1.3"/><circle cx="7.2" cy="6.5" r="0.8"/><circle cx="1" cy="8" r="0.6"/></g></svg>
<div class="t" style="left:52.4px;top:42px;color:#e0e0e0">Default</div>
<svg style="left:84.5px;top:43.5px" width="6" height="5"><path d="M0.8 1 L3 3.4 L5.2 1" fill="none" stroke="#d8d8d8" stroke-width="1"/></svg>
<div class="t" style="left:95.6px;top:42px;color:#b0b0b0">Drag:</div>
<div class="a r" style="left:116px;top:41px;width:40px;height:9px;background:#262626"></div>
<div class="t" style="left:119px;top:42px;color:#e0e0e0">Select Box</div>
<svg style="left:150px;top:43.5px" width="6" height="5"><path d="M0.8 1 L3 3.4 L5.2 1" fill="none" stroke="#d8d8d8" stroke-width="1"/></svg>
<!-- center header -->
<div class="a r" style="left:348px;top:27.5px;width:39.5px;height:9.5px;background:#282828"></div>
<svg style="left:349px;top:28px" width="10" height="9"><path d="M1.5 1 V7.5 H8.5" fill="none" stroke="#ddd" stroke-width="1"/><path d="M2 7 L6 2.5" stroke="#ddd" stroke-width="0.9"/><circle cx="7" cy="2" r="1" fill="#ddd"/></svg>
<div class="t" style="left:360.4px;top:28.5px;color:#e8e8e8">Global</div>
<svg style="left:381.5px;top:30px" width="6" height="5"><path d="M0.8 1 L3 3.4 L5.2 1" fill="none" stroke="#d8d8d8" stroke-width="1"/></svg>
<div class="a r" style="left:391px;top:27.5px;width:15.5px;height:9.5px;background:#282828"></div>
<svg style="left:392px;top:28px" width="14" height="9"><circle cx="3.5" cy="5" r="2.2" fill="none" stroke="#ddd" stroke-width="0.9"/><circle cx="6" cy="3" r="2.2" fill="none" stroke="#ddd" stroke-width="0.9"/><path d="M9.5 3.2 L11 4.7 L12.5 3.2" fill="none" stroke="#ddd" stroke-width="0.8"/></svg>
<div class="a r" style="left:410px;top:27.5px;width:26px;height:9.5px;background:#282828"></div>
<div class="a" style="left:410px;top:27.5px;width:9.5px;height:9.5px;background:#505050;border-radius:2.5px 0 0 2.5px"></div>
<svg style="left:410px;top:28px" width="26" height="9"><path d="M2.5 7 V4 A2.5 2.5 0 0 1 7.5 4 V7" fill="none" stroke="#999" stroke-width="1.2"/><path d="M11.5 3 V7 L14.5 5 L17.5 7 V3 M16 2.5 H18" stroke="#ddd" stroke-width="1" fill="none"/><path d="M20.5 3.7 L22 5.2 L23.5 3.7" fill="none" stroke="#ddd" stroke-width="0.8"/></svg>
<div class="a r" style="left:440px;top:27.5px;width:10px;height:9.5px;background:#4a4a4a"></div>
<svg style="left:440px;top:28px" width="26" height="9"><circle cx="5" cy="4.5" r="2.3" fill="none" stroke="#ccc" stroke-width="0.9"/><circle cx="5" cy="4.5" r="0.9" fill="#ccc"/><path d="M13 7.5 Q15 0 17 7.5" fill="none" stroke="#666" stroke-width="0.8"/><path d="M20.5 3.7 L22 5.2 L23.5 3.7" fill="none" stroke="#555" stroke-width="0.8"/></svg>
<!-- right header -->
<svg style="left:690px;top:27px" width="140" height="11">
 <path d="M3 8.5 L5 4 L8 4 A3 2.2 0 1 0 8 3.6" fill="#e0e0e0"/><ellipse cx="7" cy="3.8" rx="3.2" ry="2.2" fill="#d0d0d0"/><path d="M3.5 9 L5.5 5.5" stroke="#e0e0e0" stroke-width="1.5"/>
 <path d="M12.5 4.3 L14 5.8 L15.5 4.3" fill="none" stroke="#ddd" stroke-width="0.8"/>
 <rect x="21" y="0" width="9.8" height="9.8" rx="1.5" fill="#4772b3"/>
 <path d="M22.5 8.5 Q24 3 29 2 M25 8.5 Q26.5 5.5 29 5 M27.5 1.2 L29.3 2 L28.2 3.5" fill="none" stroke="#fff" stroke-width="0.9"/>
 <rect x="32" y="0" width="8" height="9.8" rx="1.5" fill="#282828"/>
 <path d="M34.5 4.3 L36 5.8 L37.5 4.3" fill="none" stroke="#ddd" stroke-width="0.8"/>
 <rect x="44.5" y="0" width="9.8" height="9.8" rx="1.5" fill="#4772b3"/>
 <circle cx="48.2" cy="5.8" r="2.8" fill="none" stroke="#fff" stroke-width="1"/><circle cx="50.5" cy="3.8" r="2.5" fill="#fff"/>
 <rect x="55.5" y="0" width="8" height="9.8" rx="1.5" fill="#282828"/>
 <path d="M57.5 4.3 L59 5.8 L60.5 4.3" fill="none" stroke="#ddd" stroke-width="0.8"/>
 <rect x="68.5" y="0" width="9" height="9.8" rx="1.5" fill="#3a3a3a"/>
 <rect x="70.3" y="2.8" width="4.5" height="5" fill="none" stroke="#bbb" stroke-width="0.8"/><rect x="72" y="1.5" width="4.5" height="5" fill="none" stroke="#bbb" stroke-width="0.8"/>
 <rect x="81.5" y="0" width="39" height="9.8" rx="1.5" fill="#595959"/>
 <rect x="91" y="0" width="10" height="9.8" fill="#4772b3"/>
 <circle cx="86.3" cy="4.9" r="3" fill="none" stroke="#bbb" stroke-width="0.8"/><path d="M83.3 4.9 H89.3 M86.3 1.9 V7.9" stroke="#bbb" stroke-width="0.6"/>
 <circle cx="96" cy="4.9" r="3.2" fill="#e6eefa"/>
 <circle cx="105.7" cy="4.9" r="3.1" fill="#9a9a9a"/><path d="M105.7 1.8 A3.1 3.1 0 0 1 108.8 4.9 L105.7 4.9 Z" fill="#ddd"/><path d="M102.6 4.9 A3.1 3.1 0 0 0 105.7 8 V4.9Z" fill="#555"/>
 <circle cx="115.3" cy="4.9" r="3.1" fill="#9a9a9a"/><path d="M112.8 6.8 Q115 3 118 3" stroke="#ddd" stroke-width="0.8" fill="none"/>
 <rect x="121" y="0" width="9.5" height="9.8" rx="1.5" fill="#282828"/>
 <path d="M123.8 4.3 L125.5 6 L127.2 4.3" fill="none" stroke="#ddd" stroke-width="0.8"/>
</svg>
<div class="a r" style="left:787px;top:41.5px;width:34px;height:9px;background:#2a2a2a"></div>
<div class="t" style="left:791px;top:42px;color:#e0e0e0">Options</div>
<svg style="left:814.5px;top:43.5px" width="6" height="5"><path d="M0.8 1 L3 3.4 L5.2 1" fill="none" stroke="#d8d8d8" stroke-width="1"/></svg>
<div class="t" style="left:34px;top:57px;color:#f0f0f0">User Perspective</div>
<div class="t" style="left:34px;top:66px;color:#e6d02b">(1) Collection | Guitar</div>
<!-- toolbar -->
<div class="a" style="left:5px;top:57.5px;width:19.3px;height:34.8px;background:#2a2a2a;border-radius:2.5px"></div>
<div class="a" style="left:5px;top:96.2px;width:19.3px;height:72.5px;background:#2a2a2a;border-radius:2.5px"></div>
<div class="a" style="left:5px;top:96.2px;width:19.3px;height:17.5px;background:#4772b3;border-radius:2.5px 2.5px 0 0"></div>
<div class="a" style="left:5px;top:172px;width:19.3px;height:35.2px;background:#2a2a2a;border-radius:2.5px"></div>
<div class="a" style="left:5px;top:210.7px;width:19.3px;height:17.8px;background:#2a2a2a;border-radius:2.5px"></div>
<svg style="left:5px;top:57.5px" width="20" height="175">
 <!-- select box -->
 <rect x="4.3" y="3.3" width="11" height="10.5" fill="none" stroke="#c8943c" stroke-width="1.1" stroke-dasharray="1.6 1"/>
 <path d="M8.2 5.8 V12 L9.6 10.6 L11 12.8 L12 12.2 L10.8 10.1 L12.8 9.9 Z" fill="#f0f0f0"/>
 <path d="M17.5 16 L18.2 15.2 V16.2Z" fill="#aaa"/>
 <!-- cursor -->
 <circle cx="9.8" cy="26.3" r="5.2" fill="none" stroke="#d94b4b" stroke-width="1.2"/>
 <circle cx="9.8" cy="26.3" r="5.2" fill="none" stroke="#eeeeee" stroke-width="1.2" stroke-dasharray="2 2.1"/>
 <path d="M9.8 22.5 V24.7 M9.8 28 V30.2 M6 26.3 H8.2 M11.4 26.3 H13.6" stroke="#999" stroke-width="0.7"/>
 <!-- move -->
 <path d="M9.8 42 V54 M3.8 48 H15.8" stroke="#fff" stroke-width="0.9"/>
 <path d="M9.8 41 L8.2 43 H11.4Z M9.8 55 L8.2 53 H11.4Z M2.8 48 L4.8 46.4 V49.6Z M16.8 48 L14.8 46.4 V49.6Z" fill="#fff"/>
 <!-- rotate -->
 <path d="M5 63.5 A5 4.5 0 0 1 14 61.5 M14.6 66.5 A5 4.5 0 0 1 5.6 68.5" fill="none" stroke="#eee" stroke-width="1.1"/>
 <path d="M14.8 59.8 L15.2 63 L12.2 62.5Z M4.8 70.2 L4.4 67 L7.4 67.5Z" fill="#eee"/>
 <circle cx="9.8" cy="65" r="1.4" fill="#eee"/>
 <!-- scale -->
 <rect x="5.5" y="84" width="6" height="6" fill="#eee"/>
 <path d="M5.5 84 V79.5 H14.5 V89.8 H11.5" fill="none" stroke="#eee" stroke-width="0.9"/>
 <path d="M9.5 85.5 L13.3 81.2 M11 80.8 H13.6 V83.4" fill="none" stroke="#eee" stroke-width="0.8"/>
 <path d="M17.5 91 L18.2 90.2 V91.2Z" fill="#aaa"/>
 <!-- transform -->
 <circle cx="9.8" cy="102.3" r="5.2" fill="none" stroke="#eee" stroke-width="0.9" stroke-dasharray="3.2 0.9"/>
 <rect x="7.3" y="99.8" width="5" height="5" fill="#eee"/>
 <!-- annotate -->
 <path d="M5.5 126.5 L13 119" stroke="#eee" stroke-width="2.2" stroke-linecap="round"/>
 <path d="M6 126 L12.5 119.5" stroke="#2a2a2a" stroke-width="0.7"/>
 <path d="M4.5 129.5 Q7.5 131.5 10 128 Q12.5 125 15 129" fill="none" stroke="#6ec59a" stroke-width="0.9"/>
 <path d="M17.5 133 L18.2 132.2 V133.2Z" fill="#aaa"/>
 <!-- measure -->
 <path d="M6 136 V147 H15" fill="none" stroke="#eee" stroke-width="1.2"/>
 <path d="M7 146 V140 A6 6 0 0 1 13 146Z" fill="#6ec59a"/>
 <path d="M5 148 H15.5" stroke="#ccc" stroke-width="0.8"/>
 <!-- add cube -->
 <path d="M6.5 160 H13.5 V167 H6.5Z M6.5 160 L9.2 157.3 H16.2 V164.3 L13.5 167 M13.5 160 L16.2 157.3" fill="none" stroke="#6ec59a" stroke-width="1"/>
 <path d="M3.5 155 H7.5 M5.5 153 V157" stroke="#6ec59a" stroke-width="1.1"/>
 <path d="M17.5 169 L18.2 168.2 V169.2Z" fill="#aaa"/>
</svg>

<!-- ============ OUTLINER ============ -->
<div class="a" style="left:827px;top:26px;width:172px;height:160px;background:#282828;border-radius:4px;overflow:hidden">
  <div class="a" style="left:0;top:0;width:172px;height:13px;background:#303030"></div>
</div>

<!-- ============ PROPERTIES ============ -->
<div class="a" style="left:827px;top:188px;width:172px;height:339px;background:#2e2e2e;border-radius:4px;overflow:hidden">
  <div class="a" style="left:0;top:0;width:172px;height:12.5px;background:#303030"></div>
  <div class="a" style="left:0;top:12.5px;width:15px;height:327px;background:#1f1f1f"></div>
</div>

<!-- ============ TIMELINE ============ -->
<div class="a" style="left:1px;top:489px;width:824px;height:37px;background:#2b2b2b;border-radius:4px;overflow:hidden">
  <div class="a" style="left:0;top:0;width:825px;height:13px;background:#303030"></div>
  <div class="a" style="left:0;top:13px;width:825px;height:12px;background:#1e1e1e"></div>
</div>

<!-- ============ STATUS BAR ============ -->
<div class="a" style="left:0;top:527px;width:1000px;height:11px;background:#1b1b1b"></div>
<!-- RIGHT -->
<svg style="left:824px;top:12px" width="176" height="12"><path d="M4.5 8.5 L6.5 3.5 L8.5 8.5Z" fill="#ddd"/><circle cx="9" cy="8" r="2" fill="none" stroke="#ddd" stroke-width="0.8"/><circle cx="9.3" cy="3" r="1" fill="#ddd"/><path d="M12.5 5 L14 6.5 L15.5 5" fill="none" stroke="#ddd" stroke-width="0.8"/><path d="M59.5 9 L62 6.5 M60.5 5 L64 8.5 M62.5 3 L65.5 6 L66 3.5Z" fill="none" stroke="#999" stroke-width="0.8"/><path d="M71 3 H75 L77 5 V9.5 H71Z" fill="#ddd"/><path d="M75 3 V5 H77" fill="none" stroke="#444" stroke-width="0.5"/><path d="M82 4 L87 9 M87 4 L82 9" stroke="#555" stroke-width="0.8"/><rect x="94.5" y="3.5" width="8" height="6.5" rx="1" fill="#ccc"/><path d="M96 9 L98.5 5.5 L101 9" fill="#333"/><path d="M103.5 5 L105 6.5 L106.5 5" fill="none" stroke="#ddd" stroke-width="0.8"/><path d="M155 3 H159 L161 5 V9.5 H155Z" fill="#ddd"/><path d="M165 4 L170 9 M170 4 L165 9" stroke="#555" stroke-width="0.8"/></svg>
<svg style="left:827px;top:26px" width="172" height="13"><rect x="6" y="2.5" width="4" height="2.5" fill="#ddd"/><rect x="9" y="6" width="6" height="2" fill="#ddd"/><rect x="9" y="9" width="6" height="2" fill="#ddd"/><path d="M7.5 5 V10 H9 M7.5 7 H9" fill="none" stroke="#ddd" stroke-width="0.7"/><path d="M16.5 5.5 L18 7 L19.5 5.5" fill="none" stroke="#ddd" stroke-width="0.8"/><rect x="26" y="3" width="8" height="7" rx="1.5" fill="#aaa"/><path d="M27 9 L30 5 L33 9Z" fill="#eee"/><path d="M35.5 5.5 L37 7 L38.5 5.5" fill="none" stroke="#ddd" stroke-width="0.8"/><rect x="50.6" y="1.5" width="60.5" height="9.5" rx="2.5" fill="#1e1e1e"/><circle cx="56" cy="5.5" r="2.2" fill="none" stroke="#ddd" stroke-width="0.9"/><path d="M54.5 7.2 L52.3 9.5" stroke="#ddd" stroke-width="1"/><path d="M140 3 H147 L144.5 6.5 V10 L142.5 9 V6.5Z" fill="none" stroke="#ddd" stroke-width="0.9"/><path d="M149.5 5.5 L151 7 L152.5 5.5" fill="none" stroke="#ddd" stroke-width="0.8"/><rect x="157" y="1.5" width="11" height="10" rx="2" fill="#4a4a4a"/><rect x="159.5" y="4" width="6" height="5.5" fill="none" stroke="#ccc" stroke-width="0.8"/><circle cx="165.5" cy="3.8" r="1.6" fill="#ddd"/></svg>
<div class="t" style="left:890.6px;top:27.5px;color:#6a6a6a;">Search</div>
<div class="a" style="left:827px;top:50.3px;width:172px;height:10.3px;background:#2b2b2b"></div>
<div class="a" style="left:827px;top:70.9px;width:172px;height:10.3px;background:#2b2b2b"></div>
<div class="a" style="left:827px;top:91.5px;width:172px;height:10.3px;background:#2b2b2b"></div>
<div class="a" style="left:827px;top:112.1px;width:172px;height:10.3px;background:#2b2b2b"></div>
<div class="a" style="left:827px;top:132.7px;width:172px;height:10.3px;background:#2b2b2b"></div>
<div class="a" style="left:827px;top:153.3px;width:172px;height:10.3px;background:#2b2b2b"></div>
<div class="a" style="left:827px;top:173.9px;width:172px;height:10.3px;background:#2b2b2b"></div>
<svg style="left:827px;top:40px" width="172" height="55"><rect x="11.5" y="1.5" width="8" height="7.5" fill="#ddd"/><rect x="11" y="1" width="9" height="2" fill="#eee"/><rect x="13.5" y="4.5" width="4" height="1" fill="#333"/><path d="M13.3 13.5 L15.9 16.1 L18.5 13.5" fill="none" stroke="#ccc" stroke-width="0.9"/><rect x="21" y="10.5" width="10.5" height="10" rx="2" fill="#4a4a4a"/><rect x="22.5" y="12" width="7.5" height="7" fill="#ddd"/><rect x="24.5" y="14.5" width="3.5" height="1" fill="#444"/><rect x="139" y="12" width="5.5" height="5.5" rx="0.8" fill="#e6e6e6"/><path d="M140.3 14.8 L141.5 16 L143.5 13.5" fill="none" stroke="#333" stroke-width="0.8"/><rect x="15.5" y="23" width="0.8" height="26" fill="#555"/><path d="M24.2 23.7 L26.6 25.9 L24.2 28.1" fill="none" stroke="#ccc" stroke-width="0.9"/><rect x="33" y="24" width="7" height="4.5" rx="1" fill="#e8913a"/><circle cx="34.5" cy="23" r="1.4" fill="#e8913a"/><circle cx="38" cy="23" r="1.4" fill="#e8913a"/><path d="M40 25 L42 24 V28 L40 27Z" fill="#e8913a"/><rect x="75" y="20.5" width="11" height="10" rx="2" fill="#555"/><path d="M77.5 24 Q80.5 21.5 83.5 24 M77.5 27 Q80.5 29.5 83.5 27" fill="none" stroke="#3fb08a" stroke-width="1.1"/><circle cx="78" cy="25.5" r="1.1" fill="#3fb08a"/><circle cx="83" cy="25.5" r="1.1" fill="#3fb08a"/><path d="M24.2 34.0 L26.6 36.2 L24.2 38.4" fill="none" stroke="#ccc" stroke-width="0.9"/><rect x="32" y="31" width="10" height="10" rx="2" fill="#555"/><path d="M33.8 32.8 H40.2 L37 39.5Z" fill="none" stroke="#e8913a" stroke-width="1.2"/><path d="M73 33 Q75 33 75.5 35 T78 38 M76.5 37 L78 38 L76.8 39.5" fill="none" stroke="#aaa" stroke-width="0.9"/><path d="M83 39.5 L87 35.5 M86 33 A2.5 2.5 0 1 0 89.5 35.5" fill="none" stroke="#5f87d9" stroke-width="1.3"/><path d="M93.5 33.5 H101.5 L97.5 40Z" fill="none" stroke="#3fb08a" stroke-width="1.2"/><circle cx="93.5" cy="33.5" r="1.2" fill="#3fb08a"/><circle cx="101.5" cy="33.5" r="1.2" fill="#3fb08a"/><circle cx="97.5" cy="40" r="1.2" fill="#3fb08a"/><path d="M24.2 44.3 L26.6 46.5 L24.2 48.7" fill="none" stroke="#ccc" stroke-width="0.9"/><circle cx="37" cy="45.5" r="3.2" fill="#e8913a"/><rect x="35.5" y="48" width="3" height="2.5" fill="#e8913a"/><circle cx="74.5" cy="46" r="3.2" fill="none" stroke="#3fb08a" stroke-width="0.9"/><path d="M74.5 48 V44.5 M73.3 45.7 L74.5 44.3 L75.7 45.7" fill="none" stroke="#3fb08a" stroke-width="0.8"/></svg>
<svg style="left:827px;top:40px" width="172" height="55"><path d="M148.5 15.5 Q152.5 11.5 156.5 15.5 Q152.5 19.5 148.5 15.5Z" fill="none" stroke="#ddd" stroke-width="0.9"/><circle cx="152.5" cy="15.5" r="1.4" fill="#ddd"/><rect x="159" y="12.5" width="7.5" height="6" rx="1" fill="#ddd"/><rect x="161" y="11.5" width="3.5" height="1.5" fill="#ddd"/><circle cx="162.7" cy="15.5" r="1.6" fill="#333"/><path d="M148.5 25.8 Q152.5 21.8 156.5 25.8 Q152.5 29.8 148.5 25.8Z" fill="none" stroke="#ddd" stroke-width="0.9"/><circle cx="152.5" cy="25.8" r="1.4" fill="#ddd"/><rect x="159" y="22.8" width="7.5" height="6" rx="1" fill="#ddd"/><rect x="161" y="21.8" width="3.5" height="1.5" fill="#ddd"/><circle cx="162.7" cy="25.8" r="1.6" fill="#333"/><path d="M148.5 36.1 Q152.5 32.1 156.5 36.1 Q152.5 40.1 148.5 36.1Z" fill="none" stroke="#ddd" stroke-width="0.9"/><circle cx="152.5" cy="36.1" r="1.4" fill="#ddd"/><rect x="159" y="33.1" width="7.5" height="6" rx="1" fill="#ddd"/><rect x="161" y="32.1" width="3.5" height="1.5" fill="#ddd"/><circle cx="162.7" cy="36.1" r="1.6" fill="#333"/><path d="M148.5 46.4 Q152.5 42.4 156.5 46.4 Q152.5 50.4 148.5 46.4Z" fill="none" stroke="#ddd" stroke-width="0.9"/><circle cx="152.5" cy="46.4" r="1.4" fill="#ddd"/><rect x="159" y="43.4" width="7.5" height="6" rx="1" fill="#ddd"/><rect x="161" y="42.4" width="3.5" height="1.5" fill="#ddd"/><circle cx="162.7" cy="46.4" r="1.6" fill="#333"/></svg>
<div class="t" style="left:850.3px;top:41.2px;color:#b8b8b8;">Scene Collection</div>
<div class="t" style="left:860.5px;top:51.5px;color:#f0f0f0;font-weight:bold">Collection</div>
<div class="t" style="left:871px;top:62px;color:#d0d0d0;">Camera</div>
<div class="t" style="left:871px;top:72.3px;color:#d0d0d0;">Guitar</div>
<div class="t" style="left:871px;top:82.8px;color:#d0d0d0;">Light</div>
<svg style="left:827px;top:188px" width="172" height="13"><rect x="7" y="2" width="7" height="3.5" rx="1.7" fill="#ddd"/><rect x="7" y="6.5" width="7" height="3.5" rx="1.7" fill="#ddd"/><circle cx="9" cy="3.7" r="1.2" fill="#333"/><circle cx="12" cy="8.2" r="1.2" fill="#333"/><path d="M16 5.5 L17.5 7 L19 5.5" fill="none" stroke="#ddd" stroke-width="0.8"/><rect x="57" y="1.5" width="60.5" height="9.5" rx="2.5" fill="#1e1e1e"/><circle cx="62" cy="5.5" r="2.2" fill="none" stroke="#ddd" stroke-width="0.9"/><path d="M60.5 7.2 L58.3 9.5" stroke="#ddd" stroke-width="1"/><rect x="158.5" y="1.5" width="9.5" height="9.5" rx="2" fill="#282828"/><path d="M161 4.8 L163.2 7 L165.4 4.8" fill="none" stroke="#eee" stroke-width="1.1"/></svg>
<div class="t" style="left:897px;top:190px;color:#6a6a6a;">Search</div>
<svg style="left:827px;top:200px" width="15" height="230"><rect x="1" y="118" width="13" height="17" rx="2" fill="#303030"/><path d="M4.5 8 V16 M9.5 8 L10.5 12 V16 M11.5 8 L10.5 12" stroke="#ddd" stroke-width="1.1" fill="none"/><circle cx="4.5" cy="15" r="1.3" fill="#ddd"/><rect x="3.5" y="28" width="8" height="6" rx="1" fill="none" stroke="#ddd" stroke-width="1"/><rect x="5.5" y="26.5" width="4" height="2" fill="#ddd"/><rect x="3.5" y="42" width="8" height="3" fill="#ddd"/><rect x="4.5" y="46" width="6" height="3.5" fill="none" stroke="#ddd" stroke-width="0.9"/><rect x="3.5" y="58" width="6" height="5" rx="1" fill="#aaa"/><rect x="5.5" y="56" width="6" height="5" rx="1" fill="#ddd"/><path d="M3.5 78 L5.5 72 L7.5 78Z" fill="#ddd"/><circle cx="9" cy="77" r="2" fill="none" stroke="#ddd" stroke-width="0.8"/><circle cx="9" cy="72" r="1" fill="#ddd"/><circle cx="7.5" cy="89.69999999999999" r="3.8" fill="#c0504f"/><path d="M5 88 Q7.5 91 10 89" stroke="#1f1f1f" stroke-width="0.9" fill="none"/><rect x="3.5" y="105" width="8" height="7.5" fill="#ddd"/><rect x="3" y="104.5" width="9" height="2" fill="#eee"/><rect x="5.5" y="108" width="4" height="1" fill="#333"/><rect x="4.5" y="123.5" width="6" height="6" fill="#e8913a"/><path d="M3.5 125 V122.5 H6 M9 122.5 H11.5 V125 M11.5 128 V130.5 H9 M6 130.5 H3.5 V128" fill="none" stroke="#ddd" stroke-width="0.7"/><path d="M4 146 L9 141" stroke="#5f87d9" stroke-width="1.6"/><circle cx="9.8" cy="140.2" r="2.2" fill="none" stroke="#5f87d9" stroke-width="1.3"/><path d="M4.5 152 L10.5 158 M4.5 152 V159 M4.5 152 H10" stroke="#5f87d9" stroke-width="1" fill="none"/><circle cx="4.5" cy="152" r="1.3" fill="#5f87d9"/><circle cx="10.5" cy="158" r="1.3" fill="#5f87d9"/><circle cx="7.5" cy="171" r="3.5" fill="none" stroke="#5f87d9" stroke-width="1.2"/><circle cx="7.5" cy="170" r="1.8" fill="#5f87d9"/><ellipse cx="7.5" cy="185.60000000000002" rx="4.2" ry="3" transform="rotate(-35 7.5 185.60000000000002)" fill="#5f87d9"/><circle cx="6.8" cy="186.2" r="0.8" fill="#1f1f1f"/><path d="M3.5 196.5 H11.5 L7.5 203Z" fill="none" stroke="#3fb08a" stroke-width="1.5"/><circle cx="7.5" cy="214" r="3.8" fill="#c0504f"/><path d="M7.5 210.2 V214 H11.3" fill="none" stroke="#1f1f1f" stroke-width="0.8"/></svg>
<svg style="left:846px;top:205px" width="150" height="32"><rect x="2.5" y="2.5" width="6" height="6" fill="#eee"/><path d="M1.5 4 V1.5 H4 M7 1.5 H9.5 V4 M9.5 7 V9.5 H7 M4 9.5 H1.5 V7" fill="none" stroke="#bbb" stroke-width="0.7"/><path d="M141 10 L143.5 7.5 M142 6 L145.5 9.5 M144 4 L147 7 L147.5 4.5Z" fill="none" stroke="#999" stroke-width="0.8"/><rect x="3" y="21.5" width="6" height="6" fill="#eee"/><path d="M2 23 V20.5 H4.5 M7.5 20.5 H10 V23 M10 26 V28.5 H7.5 M4.5 28.5 H2 V26" fill="none" stroke="#bbb" stroke-width="0.7"/><path d="M11.5 23.5 L13 25 L14.5 23.5" fill="none" stroke="#ddd" stroke-width="0.8"/></svg>
<div class="t" style="left:859.6px;top:206.5px;color:#e0e0e0;">Guitar</div>
<div class="a r" style="left:863px;top:225px;width:132px;height:9.5px;background:#1e1e1e"></div>
<div class="t" style="left:866.5px;top:225.8px;color:#e8e8e8;">Guitar</div>
<div class="a" style="left:846px;top:240px;width:150px;height:146px;background:#3a3a3a;border-radius:3px"></div>
<svg style="left:846px;top:240px" width="150" height="12"><path d="M4.5 4.8 L6.5 6.8 L8.5 4.8" fill="none" stroke="#ccc" stroke-width="0.8"/><g fill="#6a6a6a"><rect x="139" y="5" width="0.9" height="0.9"/><rect x="141" y="5" width="0.9" height="0.9"/><rect x="143" y="5" width="0.9" height="0.9"/><rect x="139" y="6.8" width="0.9" height="0.9"/><rect x="141" y="6.8" width="0.9" height="0.9"/><rect x="143" y="6.8" width="0.9" height="0.9"/></g></svg>
<div class="t" style="left:858px;top:243px;color:#e0e0e0;">Transform</div>
<div class="a" style="left:905.8px;top:257.4px;width:64.6px;height:30.0px;border-radius:2.5px;background:#ae672a"></div>
<div class="a" style="left:905.8px;top:267.1px;width:64.6px;height:0.6px;background:#2e2e2e;opacity:0.8"></div>
<div class="a" style="left:905.8px;top:277.1px;width:64.6px;height:0.6px;background:#2e2e2e;opacity:0.8"></div>
<div class="a" style="left:905.8px;top:291.4px;width:64.6px;height:30.0px;border-radius:2.5px;background:#ae672a"></div>
<div class="a" style="left:905.8px;top:301.1px;width:64.6px;height:0.6px;background:#2e2e2e;opacity:0.8"></div>
<div class="a" style="left:905.8px;top:311.1px;width:64.6px;height:0.6px;background:#2e2e2e;opacity:0.8"></div>
<div class="a" style="left:905.8px;top:338.1px;width:64.6px;height:30.0px;border-radius:2.5px;background:#8f8129"></div>
<div class="a" style="left:905.8px;top:347.8px;width:64.6px;height:0.6px;background:#2e2e2e;opacity:0.8"></div>
<div class="a" style="left:905.8px;top:357.8px;width:64.6px;height:0.6px;background:#2e2e2e;opacity:0.8"></div>
<div class="t" style="left:846px;top:258.2px;width:55px;text-align:right;color:#d8d8d8">Location X</div>
<div class="t" style="left:905.8px;top:258.2px;width:64.6px;text-align:center;color:#f4f4f4">-0.4078 m</div>
<div class="t" style="left:846px;top:268.4px;width:55px;text-align:right;color:#d8d8d8">Y</div>
<div class="t" style="left:905.8px;top:268.4px;width:64.6px;text-align:center;color:#f4f4f4">0.057897 m</div>
<div class="t" style="left:846px;top:278.6px;width:55px;text-align:right;color:#d8d8d8">Z</div>
<div class="t" style="left:905.8px;top:278.6px;width:64.6px;text-align:center;color:#f4f4f4">0.030202 m</div>
<div class="t" style="left:846px;top:292.2px;width:55px;text-align:right;color:#d8d8d8">Rotation X</div>
<div class="t" style="left:905.8px;top:292.2px;width:64.6px;text-align:center;color:#f4f4f4">-179.51°</div>
<div class="t" style="left:846px;top:302.4px;width:55px;text-align:right;color:#d8d8d8">Y</div>
<div class="t" style="left:905.8px;top:302.4px;width:64.6px;text-align:center;color:#f4f4f4">94.958°</div>
<div class="t" style="left:846px;top:312.6px;width:55px;text-align:right;color:#d8d8d8">Z</div>
<div class="t" style="left:905.8px;top:312.6px;width:64.6px;text-align:center;color:#f4f4f4">-89.77°</div>
<div class="t" style="left:846px;top:338.9px;width:55px;text-align:right;color:#d8d8d8">Scale X</div>
<div class="t" style="left:905.8px;top:338.9px;width:64.6px;text-align:center;color:#f4f4f4">0.010</div>
<div class="t" style="left:846px;top:349.1px;width:55px;text-align:right;color:#d8d8d8">Y</div>
<div class="t" style="left:905.8px;top:349.1px;width:64.6px;text-align:center;color:#f4f4f4">0.010</div>
<div class="t" style="left:846px;top:359.3px;width:55px;text-align:right;color:#d8d8d8">Z</div>
<div class="t" style="left:905.8px;top:359.3px;width:64.6px;text-align:center;color:#f4f4f4">0.010</div>
<svg style="left:970px;top:250px" width="25" height="120"><rect x="4" y="11.199999999999989" width="5.5" height="4" rx="0.5" fill="none" stroke="#bbb" stroke-width="0.7"/><path d="M3 11.199999999999989 V9.699999999999989 A1.5 1.5 0 0 1 6 9.699999999999989" fill="none" stroke="#bbb" stroke-width="0.7"/><path d="M16.7 8.899999999999988 L19.7 12.199999999999989 L16.7 15.49999999999999 L13.7 12.199999999999989Z" fill="#eee"/><rect x="4" y="21.399999999999977" width="5.5" height="4" rx="0.5" fill="none" stroke="#bbb" stroke-width="0.7"/><path d="M3 21.399999999999977 V19.899999999999977 A1.5 1.5 0 0 1 6 19.899999999999977" fill="none" stroke="#bbb" stroke-width="0.7"/><path d="M16.7 19.099999999999977 L19.7 22.399999999999977 L16.7 25.699999999999978 L13.7 22.399999999999977Z" fill="#eee"/><rect x="4" y="31.600000000000023" width="5.5" height="4" rx="0.5" fill="none" stroke="#bbb" stroke-width="0.7"/><path d="M3 31.600000000000023 V30.100000000000023 A1.5 1.5 0 0 1 6 30.100000000000023" fill="none" stroke="#bbb" stroke-width="0.7"/><path d="M16.7 29.300000000000022 L19.7 32.60000000000002 L16.7 35.90000000000002 L13.7 32.60000000000002Z" fill="#eee"/><rect x="4" y="45.19999999999999" width="5.5" height="4" rx="0.5" fill="none" stroke="#bbb" stroke-width="0.7"/><path d="M3 45.19999999999999 V43.69999999999999 A1.5 1.5 0 0 1 6 43.69999999999999" fill="none" stroke="#bbb" stroke-width="0.7"/><path d="M16.7 42.89999999999999 L19.7 46.19999999999999 L16.7 49.499999999999986 L13.7 46.19999999999999Z" fill="#eee"/><rect x="4" y="55.39999999999998" width="5.5" height="4" rx="0.5" fill="none" stroke="#bbb" stroke-width="0.7"/><path d="M3 55.39999999999998 V53.89999999999998 A1.5 1.5 0 0 1 6 53.89999999999998" fill="none" stroke="#bbb" stroke-width="0.7"/><path d="M16.7 53.09999999999998 L19.7 56.39999999999998 L16.7 59.699999999999974 L13.7 56.39999999999998Z" fill="#eee"/><rect x="4" y="65.60000000000002" width="5.5" height="4" rx="0.5" fill="none" stroke="#bbb" stroke-width="0.7"/><path d="M3 65.60000000000002 V64.10000000000002 A1.5 1.5 0 0 1 6 64.10000000000002" fill="none" stroke="#bbb" stroke-width="0.7"/><path d="M16.7 63.300000000000026 L19.7 66.60000000000002 L16.7 69.90000000000002 L13.7 66.60000000000002Z" fill="#eee"/><rect x="4" y="91.89999999999998" width="5.5" height="4" rx="0.5" fill="none" stroke="#bbb" stroke-width="0.7"/><path d="M3 91.89999999999998 V90.39999999999998 A1.5 1.5 0 0 1 6 90.39999999999998" fill="none" stroke="#bbb" stroke-width="0.7"/><path d="M16.7 89.59999999999998 L19.7 92.89999999999998 L16.7 96.19999999999997 L13.7 92.89999999999998Z" fill="#eee"/><rect x="4" y="102.10000000000002" width="5.5" height="4" rx="0.5" fill="none" stroke="#bbb" stroke-width="0.7"/><path d="M3 102.10000000000002 V100.60000000000002 A1.5 1.5 0 0 1 6 100.60000000000002" fill="none" stroke="#bbb" stroke-width="0.7"/><path d="M16.7 99.80000000000003 L19.7 103.10000000000002 L16.7 106.40000000000002 L13.7 103.10000000000002Z" fill="#eee"/><rect x="4" y="112.30000000000001" width="5.5" height="4" rx="0.5" fill="none" stroke="#bbb" stroke-width="0.7"/><path d="M3 112.30000000000001 V110.80000000000001 A1.5 1.5 0 0 1 6 110.80000000000001" fill="none" stroke="#bbb" stroke-width="0.7"/><path d="M16.7 110.00000000000001 L19.7 113.30000000000001 L16.7 116.60000000000001 L13.7 113.30000000000001Z" fill="#eee"/><circle cx="16.7" cy="79.89999999999998" r="1" fill="#ddd"/></svg>
<div class="t" style="left:846px;top:325.9px;width:55px;text-align:right;color:#d8d8d8">Mode</div>
<div class="a r" style="left:905.8px;top:325.2px;width:64.6px;height:9.6px;background:#242424"></div>
<div class="t" style="left:909px;top:325.9px;color:#e8e8e8;">XYZ Euler</div>
<svg style="left:963px;top:327.5px" width="6" height="5"><path d="M0.8 1 L3 3.4 L5.2 1" fill="none" stroke="#d8d8d8" stroke-width="1"/></svg>
<svg style="left:857.5px;top:376.0px" width="7" height="7"><path d="M1.8 0.8 L4.2 3.5 L1.8 6.2" fill="none" stroke="#bbbbbb" stroke-width="0.85"/></svg>
<div class="t" style="left:865px;top:375.5px;color:#d8d8d8;">Delta Transform</div>
<div class="a" style="left:846px;top:387.8px;width:150px;height:12.2px;background:#3a3a3a;border-radius:3px"></div>
<svg style="left:850.5px;top:390.90000000000003px" width="7" height="7"><path d="M1.8 0.8 L4.2 3.5 L1.8 6.2" fill="none" stroke="#d0d0d0" stroke-width="0.85"/></svg>
<div class="t" style="left:857.7px;top:390.6px;color:#e0e0e0;">Relations</div>
<svg style="left:984px;top:392.9px" width="8" height="3"><g fill="#6a6a6a"><rect x="1" y="0" width="0.9" height="0.9"/><rect x="3" y="0" width="0.9" height="0.9"/><rect x="5" y="0" width="0.9" height="0.9"/><rect x="1" y="1.8" width="0.9" height="0.9"/><rect x="3" y="1.8" width="0.9" height="0.9"/><rect x="5" y="1.8" width="0.9" height="0.9"/></g></svg>
<div class="a" style="left:846px;top:401.9px;width:150px;height:12.2px;background:#3a3a3a;border-radius:3px"></div>
<svg style="left:850.5px;top:404.95000000000005px" width="7" height="7"><path d="M1.8 0.8 L4.2 3.5 L1.8 6.2" fill="none" stroke="#d0d0d0" stroke-width="0.85"/></svg>
<div class="t" style="left:857.7px;top:404.65000000000003px;color:#e0e0e0;">Collections</div>
<svg style="left:984px;top:407.0px" width="8" height="3"><g fill="#6a6a6a"><rect x="1" y="0" width="0.9" height="0.9"/><rect x="3" y="0" width="0.9" height="0.9"/><rect x="5" y="0" width="0.9" height="0.9"/><rect x="1" y="1.8" width="0.9" height="0.9"/><rect x="3" y="1.8" width="0.9" height="0.9"/><rect x="5" y="1.8" width="0.9" height="0.9"/></g></svg>
<div class="a" style="left:846px;top:415.9px;width:150px;height:12.2px;background:#3a3a3a;border-radius:3px"></div>
<svg style="left:850.5px;top:419.00000000000006px" width="7" height="7"><path d="M1.8 0.8 L4.2 3.5 L1.8 6.2" fill="none" stroke="#d0d0d0" stroke-width="0.85"/></svg>
<div class="t" style="left:857.7px;top:418.70000000000005px;color:#e0e0e0;">Instancing</div>
<svg style="left:984px;top:421.0px" width="8" height="3"><g fill="#6a6a6a"><rect x="1" y="0" width="0.9" height="0.9"/><rect x="3" y="0" width="0.9" height="0.9"/><rect x="5" y="0" width="0.9" height="0.9"/><rect x="1" y="1.8" width="0.9" height="0.9"/><rect x="3" y="1.8" width="0.9" height="0.9"/><rect x="5" y="1.8" width="0.9" height="0.9"/></g></svg>
<div class="a" style="left:846px;top:430.0px;width:150px;height:12.2px;background:#3a3a3a;border-radius:3px"></div>
<svg style="left:850.5px;top:433.05000000000007px" width="7" height="7"><path d="M1.8 0.8 L4.2 3.5 L1.8 6.2" fill="none" stroke="#d0d0d0" stroke-width="0.85"/></svg>
<div class="t" style="left:857.7px;top:432.75000000000006px;color:#e0e0e0;">Motion Paths</div>
<svg style="left:984px;top:435.1px" width="8" height="3"><g fill="#6a6a6a"><rect x="1" y="0" width="0.9" height="0.9"/><rect x="3" y="0" width="0.9" height="0.9"/><rect x="5" y="0" width="0.9" height="0.9"/><rect x="1" y="1.8" width="0.9" height="0.9"/><rect x="3" y="1.8" width="0.9" height="0.9"/><rect x="5" y="1.8" width="0.9" height="0.9"/></g></svg>
<div class="a" style="left:846px;top:444.0px;width:150px;height:12.2px;background:#3a3a3a;border-radius:3px"></div>
<svg style="left:850.5px;top:447.1px" width="7" height="7"><path d="M1.8 0.8 L4.2 3.5 L1.8 6.2" fill="none" stroke="#d0d0d0" stroke-width="0.85"/></svg>
<div class="t" style="left:857.7px;top:446.8px;color:#e0e0e0;">Shading</div>
<svg style="left:984px;top:449.1px" width="8" height="3"><g fill="#6a6a6a"><rect x="1" y="0" width="0.9" height="0.9"/><rect x="3" y="0" width="0.9" height="0.9"/><rect x="5" y="0" width="0.9" height="0.9"/><rect x="1" y="1.8" width="0.9" height="0.9"/><rect x="3" y="1.8" width="0.9" height="0.9"/><rect x="5" y="1.8" width="0.9" height="0.9"/></g></svg>
<div class="a" style="left:846px;top:458.1px;width:150px;height:12.2px;background:#3a3a3a;border-radius:3px"></div>
<svg style="left:850.5px;top:461.15000000000003px" width="7" height="7"><path d="M1.8 0.8 L4.2 3.5 L1.8 6.2" fill="none" stroke="#d0d0d0" stroke-width="0.85"/></svg>
<div class="t" style="left:857.7px;top:460.85px;color:#e0e0e0;">Visibility</div>
<svg style="left:984px;top:463.2px" width="8" height="3"><g fill="#6a6a6a"><rect x="1" y="0" width="0.9" height="0.9"/><rect x="3" y="0" width="0.9" height="0.9"/><rect x="5" y="0" width="0.9" height="0.9"/><rect x="1" y="1.8" width="0.9" height="0.9"/><rect x="3" y="1.8" width="0.9" height="0.9"/><rect x="5" y="1.8" width="0.9" height="0.9"/></g></svg>
<div class="a" style="left:846px;top:472.1px;width:150px;height:12.2px;background:#3a3a3a;border-radius:3px"></div>
<svg style="left:850.5px;top:475.20000000000005px" width="7" height="7"><path d="M1.8 0.8 L4.2 3.5 L1.8 6.2" fill="none" stroke="#d0d0d0" stroke-width="0.85"/></svg>
<div class="t" style="left:857.7px;top:474.90000000000003px;color:#e0e0e0;">Viewport Display</div>
<svg style="left:984px;top:477.2px" width="8" height="3"><g fill="#6a6a6a"><rect x="1" y="0" width="0.9" height="0.9"/><rect x="3" y="0" width="0.9" height="0.9"/><rect x="5" y="0" width="0.9" height="0.9"/><rect x="1" y="1.8" width="0.9" height="0.9"/><rect x="3" y="1.8" width="0.9" height="0.9"/><rect x="5" y="1.8" width="0.9" height="0.9"/></g></svg>
<div class="a" style="left:846px;top:486.2px;width:150px;height:12.2px;background:#3a3a3a;border-radius:3px"></div>
<svg style="left:850.5px;top:489.25000000000006px" width="7" height="7"><path d="M1.8 0.8 L4.2 3.5 L1.8 6.2" fill="none" stroke="#d0d0d0" stroke-width="0.85"/></svg>
<div class="t" style="left:857.7px;top:488.95000000000005px;color:#e0e0e0;">Line Art</div>
<svg style="left:984px;top:491.3px" width="8" height="3"><g fill="#6a6a6a"><rect x="1" y="0" width="0.9" height="0.9"/><rect x="3" y="0" width="0.9" height="0.9"/><rect x="5" y="0" width="0.9" height="0.9"/><rect x="1" y="1.8" width="0.9" height="0.9"/><rect x="3" y="1.8" width="0.9" height="0.9"/><rect x="5" y="1.8" width="0.9" height="0.9"/></g></svg>
<div class="a" style="left:846px;top:500.2px;width:150px;height:12.2px;background:#3a3a3a;border-radius:3px"></div>
<svg style="left:850.5px;top:503.30000000000007px" width="7" height="7"><path d="M1.8 0.8 L4.2 3.5 L1.8 6.2" fill="none" stroke="#d0d0d0" stroke-width="0.85"/></svg>
<div class="t" style="left:857.7px;top:503.00000000000006px;color:#e0e0e0;">Animation</div>
<svg style="left:984px;top:505.3px" width="8" height="3"><g fill="#6a6a6a"><rect x="1" y="0" width="0.9" height="0.9"/><rect x="3" y="0" width="0.9" height="0.9"/><rect x="5" y="0" width="0.9" height="0.9"/><rect x="1" y="1.8" width="0.9" height="0.9"/><rect x="3" y="1.8" width="0.9" height="0.9"/><rect x="5" y="1.8" width="0.9" height="0.9"/></g></svg>
<div class="a" style="left:846px;top:514.2px;width:150px;height:12.2px;background:#3a3a3a;border-radius:3px"></div>
<svg style="left:850.5px;top:517.35px" width="7" height="7"><path d="M1.8 0.8 L4.2 3.5 L1.8 6.2" fill="none" stroke="#d0d0d0" stroke-width="0.85"/></svg>
<div class="t" style="left:857.7px;top:517.0500000000001px;color:#e0e0e0;">Custom Properties</div>
<svg style="left:984px;top:519.4px" width="8" height="3"><g fill="#6a6a6a"><rect x="1" y="0" width="0.9" height="0.9"/><rect x="3" y="0" width="0.9" height="0.9"/><rect x="5" y="0" width="0.9" height="0.9"/><rect x="1" y="1.8" width="0.9" height="0.9"/><rect x="3" y="1.8" width="0.9" height="0.9"/><rect x="5" y="1.8" width="0.9" height="0.9"/></g></svg>
<!-- BOTTOM -->
<svg style="left:0;top:489px" width="30" height="13"><circle cx="10.5" cy="6.5" r="3.6" fill="#eee"/><path d="M10.5 3.5 V6.5 L8.5 8.5" stroke="#333" stroke-width="0.9" fill="none"/><path d="M15.5 6 L17 7.5 L18.5 6" fill="none" stroke="#ddd" stroke-width="0.8"/></svg>
<div class="a r" style="left:24.3px;top:491px;width:35.3px;height:9.5px;background:#282828"></div>
<div class="t" style="left:27.5px;top:491.8px;color:#d8d8d8;">Playback</div>
<svg style="left:53px;top:493.5px" width="6" height="5"><path d="M0.8 1 L3 3.4 L5.2 1" fill="none" stroke="#d8d8d8" stroke-width="1"/></svg>
<div class="a r" style="left:61.2px;top:491px;width:30.6px;height:9.5px;background:#282828"></div>
<div class="t" style="left:64.4px;top:491.8px;color:#d8d8d8;">Keying</div>
<svg style="left:85px;top:493.5px" width="6" height="5"><path d="M0.8 1 L3 3.4 L5.2 1" fill="none" stroke="#d8d8d8" stroke-width="1"/></svg>
<div class="t" style="left:97px;top:491.8px;color:#d8d8d8;">View</div>
<div class="t" style="left:118.8px;top:491.8px;color:#d8d8d8;">Marker</div>
<div class="a r" style="left:364.5px;top:491px;width:9.5px;height:9.5px;background:#474747"></div>
<svg style="left:364px;top:489px" width="90" height="13"><circle cx="5.2" cy="6.8" r="2.5" fill="none" stroke="#aaa" stroke-width="0.9"/><path d="M12 5.8 L13.5 7.3 L15 5.8" fill="none" stroke="#666" stroke-width="0.8"/></svg>
<div class="a r" style="left:388px;top:491px;width:61px;height:9.5px;background:#3a3a3a"></div>
<svg style="left:388px;top:489px" width="62" height="13"><g fill="#eee"><rect x="3.5" y="3.5" width="1" height="6"/><path d="M8.5 3.5 V9.5 L4.8 6.5Z"/><path d="M12 6.5 L14.2 4 L16.4 6.5 L14.2 9Z M16 6.5 L18.5 4 V9Z"/><path d="M28.5 3.5 V9.5 L24 6.5Z"/><path d="M33.8 3.5 V9.5 L38.2 6.5Z"/><path d="M42 4 V9 L44.5 6.5Z M44 6.5 L46.2 4 L48.4 6.5 L46.2 9Z"/><path d="M53.5 3.5 V9.5 L57.2 6.5Z"/><rect x="57.5" y="3.5" width="1" height="6"/></g></svg>
<div class="a r" style="left:678px;top:491.2px;width:39px;height:9.3px;background:#3f3f3f"></div>
<div class="t" style="left:695px;top:491.8px;color:#e0e0e0;">1</div>
<div class="a r" style="left:720.5px;top:491.2px;width:100.3px;height:9.3px;background:#3f3f3f"></div>
<div class="a" style="left:776.4px;top:491.2px;width:0.6px;height:9.3px;background:#2a2a2a"></div>
<svg style="left:720px;top:489px" width="12" height="13"><circle cx="5.3" cy="7" r="3" fill="none" stroke="#ddd" stroke-width="0.9"/><path d="M5.3 4 V2.5 M4 2.3 H6.6 M5.3 7 L6.5 5.5" stroke="#ddd" stroke-width="0.8"/></svg>
<div class="t" style="left:737.6px;top:491.8px;color:#e0e0e0;">Start</div>
<div class="t" style="left:765.5px;top:491.8px;color:#e0e0e0;">1</div>
<div class="t" style="left:784.5px;top:491.8px;color:#e0e0e0;">End</div>
<div class="t" style="left:803px;top:491.8px;color:#e0e0e0;">250</div>
<svg style="left:1px;top:502px" width="825" height="25"><rect x="57.1" y="12" width="0.7" height="12" fill="#333333"/><rect x="87.8" y="12" width="0.7" height="12" fill="#333333"/><rect x="118.4" y="12" width="0.7" height="12" fill="#333333"/><rect x="149.1" y="12" width="0.7" height="12" fill="#333333"/><rect x="179.7" y="12" width="0.7" height="12" fill="#333333"/><rect x="210.4" y="12" width="0.7" height="12" fill="#333333"/><rect x="241.1" y="12" width="0.7" height="12" fill="#333333"/><rect x="271.7" y="12" width="0.7" height="12" fill="#333333"/><rect x="302.4" y="12" width="0.7" height="12" fill="#333333"/><rect x="333.0" y="12" width="0.7" height="12" fill="#333333"/><rect x="363.7" y="12" width="0.7" height="12" fill="#333333"/><rect x="394.4" y="12" width="0.7" height="12" fill="#333333"/><rect x="425.0" y="12" width="0.7" height="12" fill="#333333"/><rect x="455.7" y="12" width="0.7" height="12" fill="#333333"/><rect x="486.3" y="12" width="0.7" height="12" fill="#333333"/><rect x="517.0" y="12" width="0.7" height="12" fill="#333333"/><rect x="547.7" y="12" width="0.7" height="12" fill="#333333"/><rect x="578.3" y="12" width="0.7" height="12" fill="#333333"/><rect x="609.0" y="12" width="0.7" height="12" fill="#333333"/><rect x="639.6" y="12" width="0.7" height="12" fill="#333333"/><rect x="670.3" y="12" width="0.7" height="12" fill="#333333"/><rect x="701.0" y="12" width="0.7" height="12" fill="#333333"/><rect x="731.6" y="12" width="0.7" height="12" fill="#333333"/><rect x="762.3" y="12" width="0.7" height="12" fill="#333333"/><rect x="792.9" y="12" width="0.7" height="12" fill="#333333"/><rect x="41.8" y="12" width="0.6" height="12" fill="#2e2e2e"/><rect x="72.4" y="12" width="0.6" height="12" fill="#2e2e2e"/><rect x="103.1" y="12" width="0.6" height="12" fill="#2e2e2e"/><rect x="133.7" y="12" width="0.6" height="12" fill="#2e2e2e"/><rect x="164.4" y="12" width="0.6" height="12" fill="#2e2e2e"/><rect x="195.1" y="12" width="0.6" height="12" fill="#2e2e2e"/><rect x="225.7" y="12" width="0.6" height="12" fill="#2e2e2e"/><rect x="256.4" y="12" width="0.6" height="12" fill="#2e2e2e"/><rect x="287.0" y="12" width="0.6" height="12" fill="#2e2e2e"/><rect x="317.7" y="12" width="0.6" height="12" fill="#2e2e2e"/><rect x="348.4" y="12" width="0.6" height="12" fill="#2e2e2e"/><rect x="379.0" y="12" width="0.6" height="12" fill="#2e2e2e"/><rect x="409.7" y="12" width="0.6" height="12" fill="#2e2e2e"/><rect x="440.3" y="12" width="0.6" height="12" fill="#2e2e2e"/><rect x="471.0" y="12" width="0.6" height="12" fill="#2e2e2e"/><rect x="501.7" y="12" width="0.6" height="12" fill="#2e2e2e"/><rect x="532.3" y="12" width="0.6" height="12" fill="#2e2e2e"/><rect x="563.0" y="12" width="0.6" height="12" fill="#2e2e2e"/><rect x="593.6" y="12" width="0.6" height="12" fill="#2e2e2e"/><rect x="624.3" y="12" width="0.6" height="12" fill="#2e2e2e"/><rect x="655.0" y="12" width="0.6" height="12" fill="#2e2e2e"/><rect x="685.6" y="12" width="0.6" height="12" fill="#2e2e2e"/><rect x="716.3" y="12" width="0.6" height="12" fill="#2e2e2e"/><rect x="746.9" y="12" width="0.6" height="12" fill="#2e2e2e"/><rect x="777.6" y="12" width="0.6" height="12" fill="#2e2e2e"/><rect x="808.3" y="12" width="0.6" height="12" fill="#2e2e2e"/><rect x="792.9" y="12" width="32.1" height="13" fill="#202020"/><rect x="0" y="23" width="825" height="1" fill="#3a3a3a"/></svg>
<div class="t" style="left:48.1px;top:504.7px;width:20px;text-align:center;color:#c8c8c8">10</div>
<div class="t" style="left:78.8px;top:504.7px;width:20px;text-align:center;color:#c8c8c8">20</div>
<div class="t" style="left:109.4px;top:504.7px;width:20px;text-align:center;color:#c8c8c8">30</div>
<div class="t" style="left:140.1px;top:504.7px;width:20px;text-align:center;color:#c8c8c8">40</div>
<div class="t" style="left:170.7px;top:504.7px;width:20px;text-align:center;color:#c8c8c8">50</div>
<div class="t" style="left:201.4px;top:504.7px;width:20px;text-align:center;color:#c8c8c8">60</div>
<div class="t" style="left:232.1px;top:504.7px;width:20px;text-align:center;color:#c8c8c8">70</div>
<div class="t" style="left:262.7px;top:504.7px;width:20px;text-align:center;color:#c8c8c8">80</div>
<div class="t" style="left:293.4px;top:504.7px;width:20px;text-align:center;color:#c8c8c8">90</div>
<div class="t" style="left:324.0px;top:504.7px;width:20px;text-align:center;color:#c8c8c8">100</div>
<div class="t" style="left:354.7px;top:504.7px;width:20px;text-align:center;color:#c8c8c8">110</div>
<div class="t" style="left:385.4px;top:504.7px;width:20px;text-align:center;color:#c8c8c8">120</div>
<div class="t" style="left:416.0px;top:504.7px;width:20px;text-align:center;color:#c8c8c8">130</div>
<div class="t" style="left:446.7px;top:504.7px;width:20px;text-align:center;color:#c8c8c8">140</div>
<div class="t" style="left:477.3px;top:504.7px;width:20px;text-align:center;color:#c8c8c8">150</div>
<div class="t" style="left:508.0px;top:504.7px;width:20px;text-align:center;color:#c8c8c8">160</div>
<div class="t" style="left:538.7px;top:504.7px;width:20px;text-align:center;color:#c8c8c8">170</div>
<div class="t" style="left:569.3px;top:504.7px;width:20px;text-align:center;color:#c8c8c8">180</div>
<div class="t" style="left:600.0px;top:504.7px;width:20px;text-align:center;color:#c8c8c8">190</div>
<div class="t" style="left:630.6px;top:504.7px;width:20px;text-align:center;color:#c8c8c8">200</div>
<div class="t" style="left:661.3px;top:504.7px;width:20px;text-align:center;color:#c8c8c8">210</div>
<div class="t" style="left:692.0px;top:504.7px;width:20px;text-align:center;color:#c8c8c8">220</div>
<div class="t" style="left:722.6px;top:504.7px;width:20px;text-align:center;color:#c8c8c8">230</div>
<div class="t" style="left:753.3px;top:504.7px;width:20px;text-align:center;color:#c8c8c8">240</div>
<div class="t" style="left:783.9px;top:504.7px;width:20px;text-align:center;color:#c8c8c8">250</div>
<div class="a" style="left:30px;top:513px;width:1.2px;height:14px;background:#4772b3"></div>
<div class="a" style="left:24.3px;top:504.2px;width:12.7px;height:9px;background:#4772b3;border-radius:2px"></div>
<div class="t" style="left:24.3px;top:504.7px;width:12.7px;text-align:center;color:#ffffff;font-weight:bold">1</div>
<svg style="left:2px;top:516px" width="6" height="8"><path d="M1.5 1.5 L3.5 3.5 L1.5 5.5" fill="none" stroke="#888" stroke-width="0.7"/></svg>
<svg style="left:0;top:528px" width="120" height="11"><rect x="5.5" y="1.5" width="5" height="7.5" rx="2" fill="none" stroke="#bbb" stroke-width="0.8"/><rect x="6.2" y="2.2" width="2" height="3" fill="#bbb"/><rect x="34" y="1.5" width="5" height="7.5" rx="2" fill="none" stroke="#bbb" stroke-width="0.8"/><rect x="35.5" y="2.2" width="2" height="3" fill="#bbb"/><rect x="78.5" y="1.5" width="5" height="7.5" rx="2" fill="none" stroke="#bbb" stroke-width="0.8"/><rect x="81" y="2.2" width="2" height="3" fill="#bbb"/></svg>
<div class="t" style="left:12.5px;top:529.2px;color:#b0b0b0;">Select</div>
<div class="t" style="left:40.8px;top:529.2px;color:#b0b0b0;">Rotate View</div>
<div class="t" style="left:85.8px;top:529.2px;color:#b0b0b0;">Options</div>
<svg style="left:964px;top:527px" width="14" height="11"><path d="M3 2.5 L7 8 M7 2.5 L3 8" stroke="#aaa" stroke-width="0.8"/><circle cx="5" cy="5.3" r="3.2" fill="none" stroke="#aaa" stroke-width="0.8"/><rect x="12.8" y="1.5" width="0.6" height="7.5" fill="#888"/></svg>
<div class="t" style="left:979.6px;top:529px;color:#a0a0a0;">4.5.0</div>
<svg style="left:770px;top:55px" width="56" height="105"><path d="M28.6 24 V7.3 M28.6 24 L12.7 24 M28.6 24 L32.8 26.9" stroke-width="1" fill="none"/><path d="M28.6 24 V7.3" stroke="#2f83e3" stroke-width="1"/><path d="M28.6 24 H12.7" stroke="#e0304a" stroke-width="1"/><path d="M28.6 24 L32.8 26.9" stroke="#7ed11c" stroke-width="1"/><circle cx="24.5" cy="20.2" r="2.8" fill="none" stroke="#6a9a2a" stroke-width="0.8"/><circle cx="45.3" cy="22.9" r="3.5" fill="#5a3238" stroke="#b03040" stroke-width="0.8"/><circle cx="28.6" cy="40.3" r="3.4" fill="#2c4a6e" stroke="#2f6fc0" stroke-width="0.8"/><circle cx="28.6" cy="7.3" r="3.5" fill="#2f83e3"/><circle cx="12.7" cy="24" r="3.6" fill="#e0304a"/><circle cx="32.8" cy="26.9" r="3.8" fill="#7ed11c"/><path d="M27 5.5 H30.2 L27 9.2 H30.2" fill="none" stroke="#111" stroke-width="0.7"/><path d="M11.2 22.5 L14.2 25.5 M14.2 22.5 L11.2 25.5" stroke="#111" stroke-width="0.7"/><path d="M31.3 25.2 L32.8 26.9 L34.3 25.2 M32.8 26.9 V28.8" fill="none" stroke="#111" stroke-width="0.7"/><circle cx="43.5" cy="51.9" r="5.3" fill="#2e2e2e"/><circle cx="43.5" cy="67.5" r="5.3" fill="#2e2e2e"/><circle cx="43.5" cy="83.1" r="5.3" fill="#2e2e2e"/><circle cx="43.5" cy="98.7" r="5.3" fill="#2e2e2e"/><circle cx="44.3" cy="51.1" r="2.3" fill="none" stroke="#ddd" stroke-width="0.9"/><path d="M42.6 52.9 L40.6 54.9" stroke="#ddd" stroke-width="1.1"/><path d="M43.3 51.1 H45.3 M44.3 50.1 V52.1" stroke="#ddd" stroke-width="0.5"/><path d="M41 66 V69 Q41.5 71.2 44 71.2 Q46.5 71.2 46.5 68.5 V64.5 M43 63.8 V68 M44.7 64 V68" fill="none" stroke="#ddd" stroke-width="1.1"/><circle cx="42.2" cy="81.7" r="1.9" fill="none" stroke="#ddd" stroke-width="0.9"/><circle cx="45" cy="80.6" r="1.5" fill="none" stroke="#ddd" stroke-width="0.8"/><rect x="40.5" y="84.2" width="4" height="2.5" fill="#ddd"/><path d="M44.5 85.5 L47 84 V87Z" fill="#ddd"/><path d="M40.5 102 L41.5 95.5 H45.5 L46.5 102Z M40.8 99.5 H46.2 M42.5 95.5 V102 M44.5 95.5 V102" fill="none" stroke="#ddd" stroke-width="0.8"/><path d="M54 12 L52.5 14 L54 16" fill="none" stroke="#888" stroke-width="0.7"/></svg>
</body></html>
